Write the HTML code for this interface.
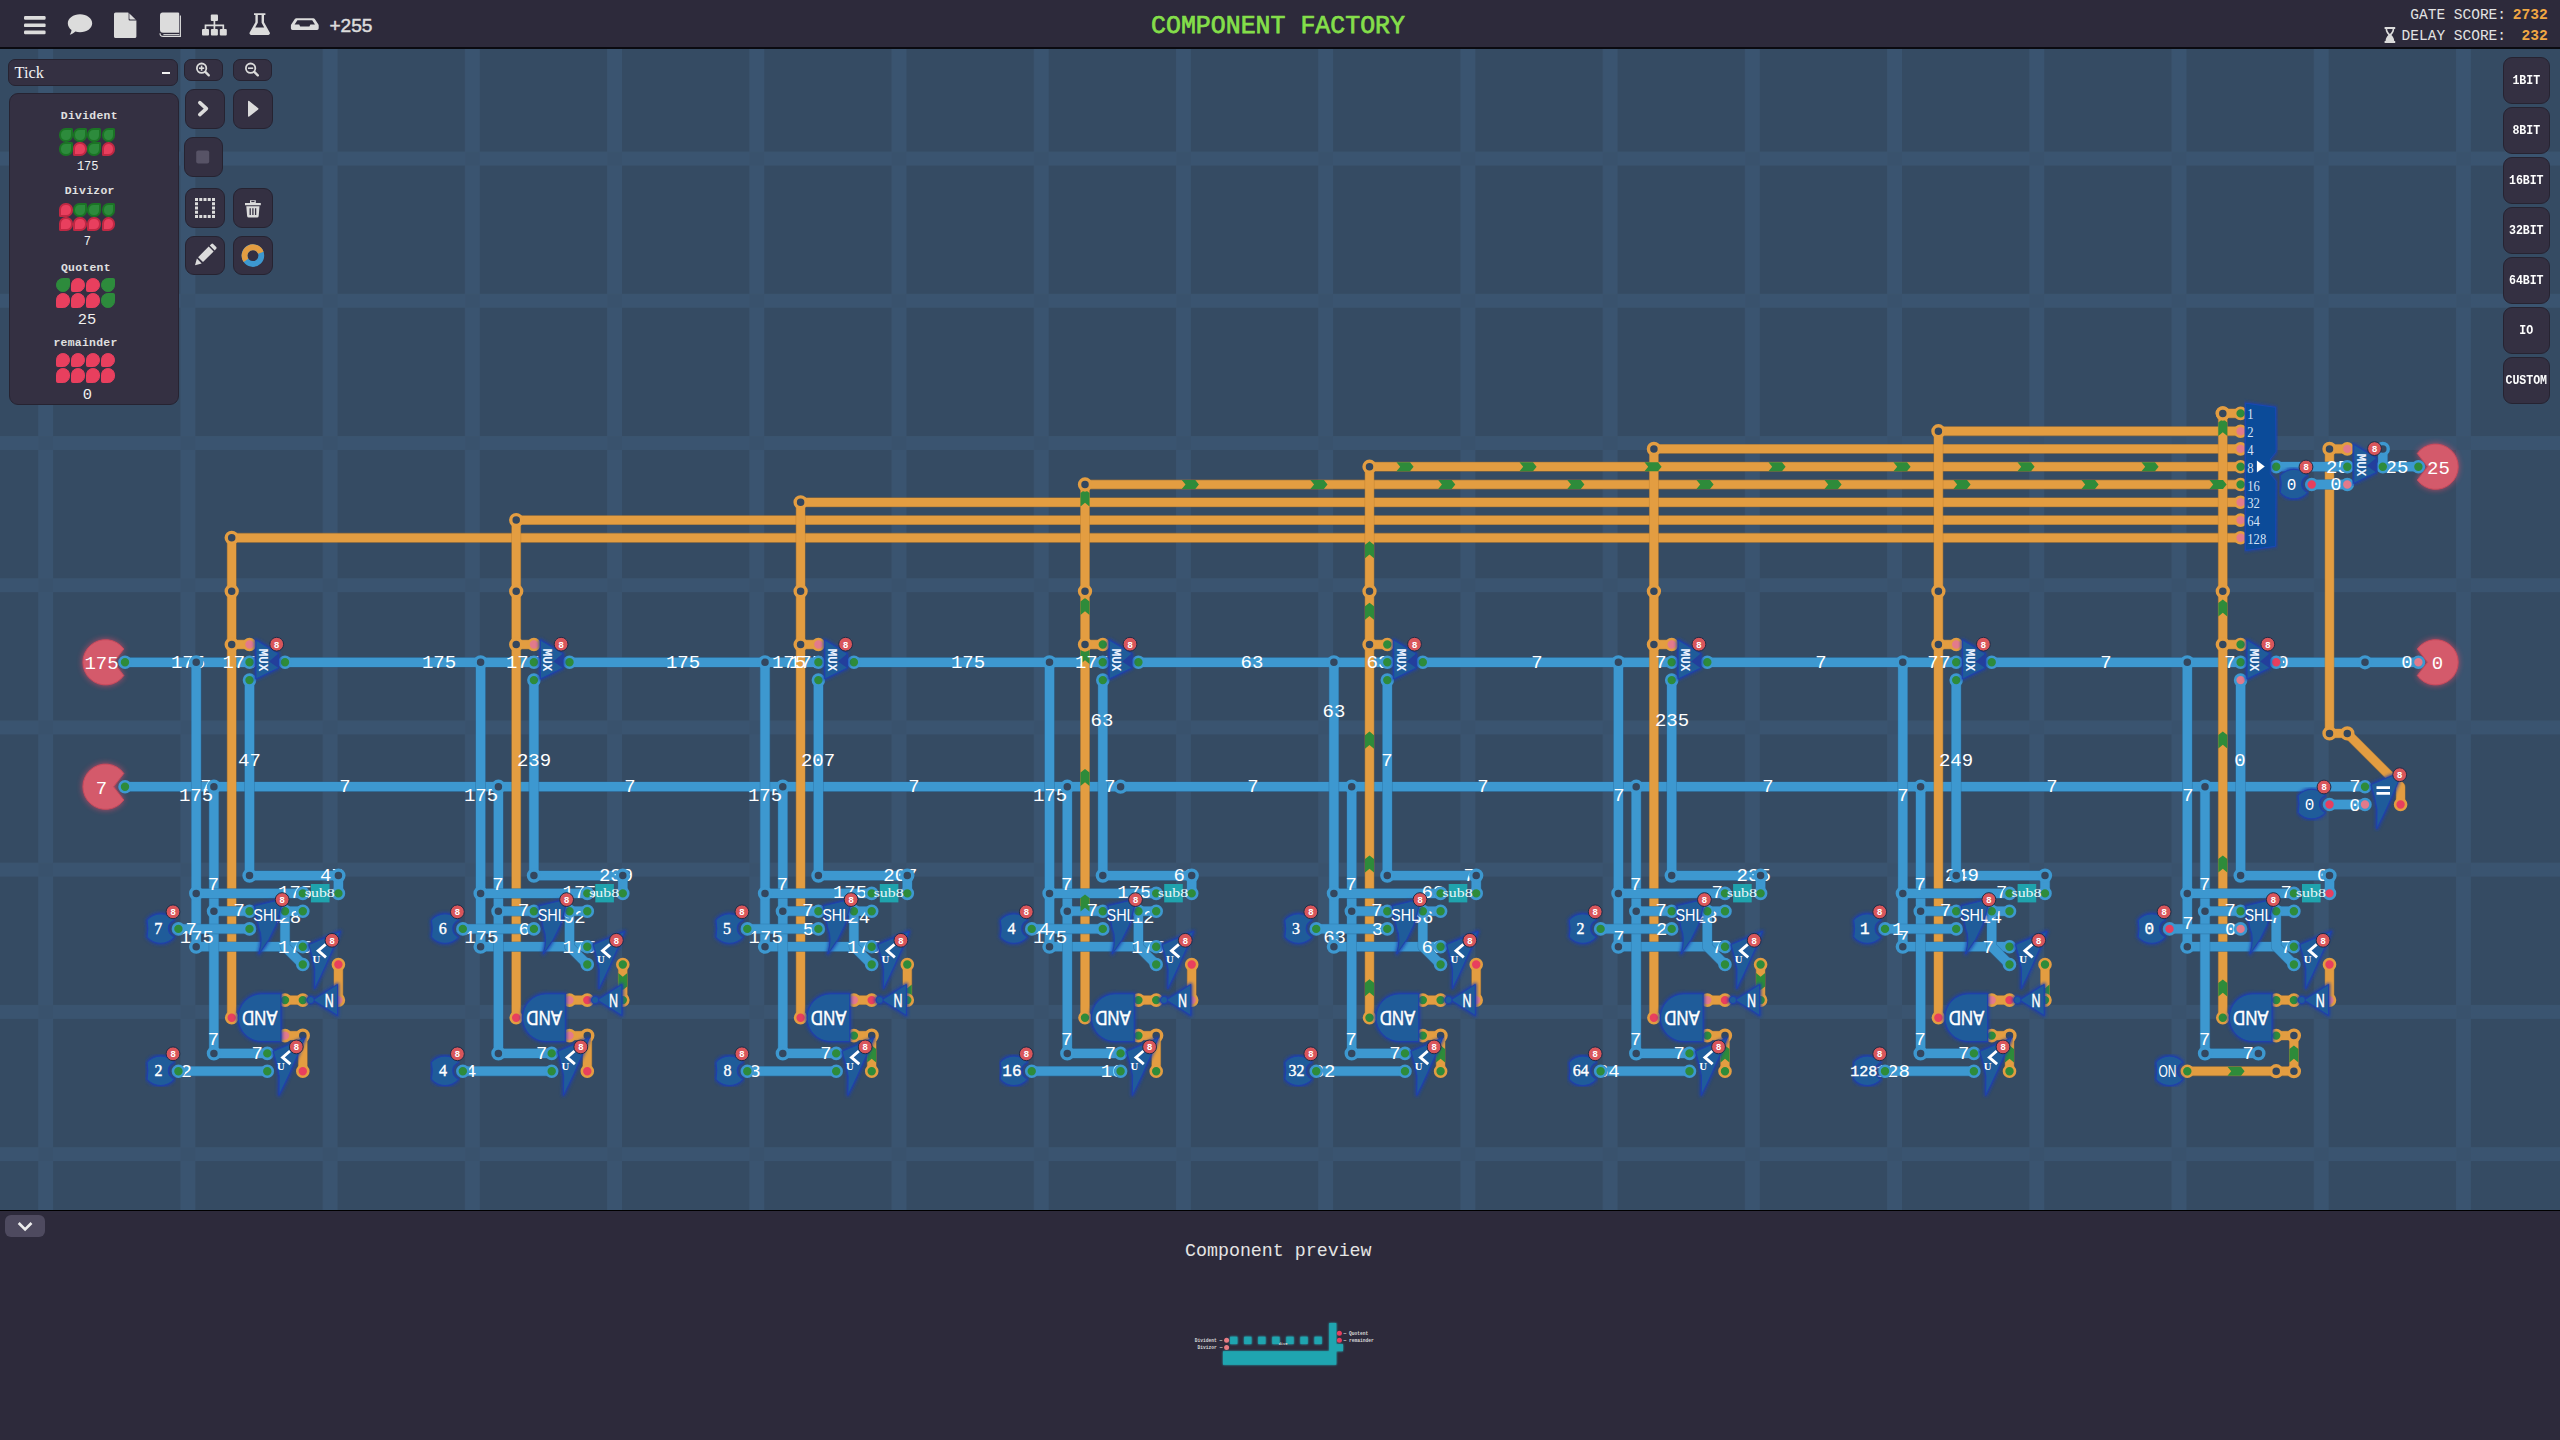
<!DOCTYPE html>
<html><head><meta charset="utf-8"><title>Component Factory</title>
<style>
html,body{margin:0;padding:0;background:#2d2a3b;overflow:hidden}
body{width:2560px;height:1440px;position:relative;font-family:"Liberation Mono",monospace;color:#e6e6e6}
#canvas{position:absolute;left:0;top:0;width:2560px;height:1211px;background:#3a5470;overflow:hidden}
#top{position:absolute;left:0;top:0;width:2560px;height:47px;background:#2d2a3b;border-bottom:2px solid #0a0a10}
#bottom{position:absolute;left:0;top:1210px;width:2560px;height:230px;background:#2d2a3b;border-top:1px solid #000}
.btn{position:absolute;background:#343042;border:1px solid #262331;border-radius:9px;box-sizing:border-box}
.rb{position:absolute;left:2503px;width:46.5px;height:46.5px;background:#343042;border:1px solid #262331;border-radius:9px;box-sizing:border-box;
 font:bold 11.6px "Liberation Mono",monospace;color:#fff;text-align:center;line-height:43.4px;letter-spacing:-0.05px}
.pl{position:absolute;left:0;width:170px;text-align:center;font:bold 11.4px "Liberation Mono",monospace;color:#e0e0e0;letter-spacing:.3px}
.pv{position:absolute;left:0;width:170px;text-align:center;font:12px "Liberation Mono",monospace;color:#f0f0f0}
svg{position:absolute;left:0;top:0}
</style></head><body>
<div id="canvas">

<svg width="2560" height="1211" viewBox="0 0 2560 1211">
<defs>
<pattern id="grid" x="53.1" y="165.5" width="142.222" height="142.222" patternUnits="userSpaceOnUse"><rect x="0" y="0" width="127.42" height="128.42" fill="#354b63"/><rect x="127.42" y="128.42" width="14.8" height="13.8" fill="#39526d"/></pattern>
<g id="bdg"><circle r="6.9" fill="#d9565b" stroke="#1f2c46" stroke-width="1"/><text y="3.3" text-anchor="middle" font-family="Liberation Sans" font-weight="bold" font-size="9.4" fill="#fff">8</text></g>
<path id="chv" d="M0 -8.6 L4.5 -5 L4.5 8.5 L0 4.8 L-4.5 8.5 L-4.5 -5 Z" fill="#2e8b3a"/>
<g id="colS"><path d="M255.9 640 L278.5 653.6 L278.5 668 L255.9 679 Z"/>
<path d="M254.6 905.8 L276.1 900.6 L281.3 905.8 L276.1 924.7 Q270 940 258.9 953.9 Q263.5 938 258.9 928.1 Z"/>
<path d="M340.3 931.4 L308.8 944.6 Q313 958 314.8 969.2 L314.6 988.6 Q320 978 325.1 966.8 L333.3 948.3 Z"/>
<path d="M337.5 984.4 L337.5 1015.4 L313 1000 Z"/><circle cx="310.7" cy="1000" r="3.6"/>
<path d="M280.9 993.8 L262 993.8 A23.8 23.9 0 0 0 262 1041.6 L280.9 1041.6 Z"/>
<path d="M174.2 920.3 A17.5 17.5 0 0 0 147.1 920.3 Q148.8 928.6 147.1 936.9 A17.5 17.5 0 0 0 174.2 936.9 A8.8 8.8 0 0 1 174.2 920.3 Z"/></g>
<g id="ultS"><path d="M340.3 931.4 L308.8 944.6 Q313 958 314.8 969.2 L314.6 988.6 Q320 978 325.1 966.8 L333.3 948.3 Z"/></g>
<g id="cstS"><path d="M13.6 -8.3 A17.5 17.5 0 0 0 -13.5 -8.3 Q-11.8 0.0 -13.5 8.3 A17.5 17.5 0 0 0 13.6 8.3 A8.8 8.8 0 0 1 13.6 -8.3 Z"/></g>
<filter id="glow" x="-5%" y="-5%" width="110%" height="110%"><feGaussianBlur stdDeviation="1.6"/></filter>
<filter id="rglow" x="-30%" y="-30%" width="160%" height="160%"><feGaussianBlur stdDeviation="3"/></filter>
<linearGradient id="shg" x1="0" y1="0" x2="1" y2="1"><stop offset="0" stop-color="#1f5c9a"/><stop offset="1" stop-color="#2a78c4"/></linearGradient>
<g id="col">
 <g filter="url(#glow)" fill="#1f3fae" stroke="#1f3fae" stroke-width="3.5" stroke-linejoin="round" opacity=".85"><use href="#colS"/></g>
 <g fill="#1f5c9a" stroke="#1f3fae" stroke-width="1" stroke-linejoin="round"><use href="#colS"/></g>
 <path d="M278.5 653.6 L269 661.4 L278.5 668 Z" fill="#233f9c"/>
 <rect x="310.9" y="884" width="18.6" height="18.4" fill="#1fa3ad"/>
</g>
<g id="ult2">
 <g filter="url(#glow)" fill="#1f3fae" stroke="#1f3fae" stroke-width="3.5" stroke-linejoin="round" opacity=".85"><use href="#ultS"/></g>
 <g fill="#1f5c9a" stroke="#1f3fae" stroke-width="1" stroke-linejoin="round"><use href="#ultS"/></g>
</g>
<g id="cst">
 <g filter="url(#glow)" fill="#1f3fae" stroke="#1f3fae" stroke-width="3.5" stroke-linejoin="round" opacity=".85"><use href="#cstS"/></g>
 <g fill="#1f5c9a" stroke="#1f3fae" stroke-width="1" stroke-linejoin="round"><use href="#cstS"/></g>
</g>
<g id="ultT"><path d="M325.6 944.3 L318.2 950.7 L326 957.4" fill="none" stroke="#fff" stroke-width="2.9"/><text x="316.5" y="963.1" text-anchor="middle" font-family="Liberation Serif" font-weight="bold" font-size="11" fill="#fff" textLength="7.8" lengthAdjust="spacingAndGlyphs">U</text></g>
<g id="colTop" fill="#fff" font-family="Liberation Sans">
 <text transform="translate(258.9 660.0) rotate(90)" text-anchor="middle" font-family="Liberation Mono" font-weight="bold" font-size="12.6" fill="#eaf2ff">MUX</text>
 <text x="319.8" y="896.8" text-anchor="middle" font-family="Liberation Serif" font-size="12.6" fill="#e8f6f6" textLength="30" lengthAdjust="spacingAndGlyphs">sub8</text>
 <text x="267.3" y="920.6" text-anchor="middle" font-size="16.4" textLength="28" lengthAdjust="spacingAndGlyphs">SHL</text>
 <use href="#ultT"/>
 <text x="329.2" y="1006.8" text-anchor="middle" font-size="18.4" textLength="9" lengthAdjust="spacingAndGlyphs" stroke="#fff" stroke-width=".5">N</text>
 <text transform="translate(259.8 1018) rotate(180)" y="7.2" text-anchor="middle" font-size="20" textLength="35.4" lengthAdjust="spacingAndGlyphs" stroke="#fff" stroke-width=".45">AND</text>
 <use href="#bdg" x="276.7" y="644.2"/><use href="#bdg" x="282.2" y="899.6"/><use href="#bdg" x="332" y="940.3"/>
 <use href="#bdg" x="173" y="911.8"/>
</g>
</defs>
<rect x="0" y="0" width="2560" height="1211" fill="url(#grid)"/>
<polyline points="125.0,662.3 249.5,662.3" fill="none" stroke="#2a6a9c" stroke-opacity=".6" stroke-width="10.5" stroke-linejoin="round"/>
<polyline points="125.0,662.3 249.5,662.3" fill="none" stroke="#3d98d0" stroke-width="9.3" stroke-linejoin="round"/>
<polyline points="285.0,662.3 533.9,662.3" fill="none" stroke="#2a6a9c" stroke-opacity=".6" stroke-width="10.5" stroke-linejoin="round"/>
<polyline points="285.0,662.3 533.9,662.3" fill="none" stroke="#3d98d0" stroke-width="9.3" stroke-linejoin="round"/>
<polyline points="569.5,662.3 818.4,662.3" fill="none" stroke="#2a6a9c" stroke-opacity=".6" stroke-width="10.5" stroke-linejoin="round"/>
<polyline points="569.5,662.3 818.4,662.3" fill="none" stroke="#3d98d0" stroke-width="9.3" stroke-linejoin="round"/>
<polyline points="853.9,662.3 1102.8,662.3" fill="none" stroke="#2a6a9c" stroke-opacity=".6" stroke-width="10.5" stroke-linejoin="round"/>
<polyline points="853.9,662.3 1102.8,662.3" fill="none" stroke="#3d98d0" stroke-width="9.3" stroke-linejoin="round"/>
<polyline points="1138.4,662.3 1387.3,662.3" fill="none" stroke="#2a6a9c" stroke-opacity=".6" stroke-width="10.5" stroke-linejoin="round"/>
<polyline points="1138.4,662.3 1387.3,662.3" fill="none" stroke="#3d98d0" stroke-width="9.3" stroke-linejoin="round"/>
<polyline points="1422.8,662.3 1671.7,662.3" fill="none" stroke="#2a6a9c" stroke-opacity=".6" stroke-width="10.5" stroke-linejoin="round"/>
<polyline points="1422.8,662.3 1671.7,662.3" fill="none" stroke="#3d98d0" stroke-width="9.3" stroke-linejoin="round"/>
<polyline points="1707.3,662.3 1956.2,662.3" fill="none" stroke="#2a6a9c" stroke-opacity=".6" stroke-width="10.5" stroke-linejoin="round"/>
<polyline points="1707.3,662.3 1956.2,662.3" fill="none" stroke="#3d98d0" stroke-width="9.3" stroke-linejoin="round"/>
<polyline points="1991.7,662.3 2240.6,662.3" fill="none" stroke="#2a6a9c" stroke-opacity=".6" stroke-width="10.5" stroke-linejoin="round"/>
<polyline points="1991.7,662.3 2240.6,662.3" fill="none" stroke="#3d98d0" stroke-width="9.3" stroke-linejoin="round"/>
<polyline points="2276.2,662.3 2418.4,662.3" fill="none" stroke="#2a6a9c" stroke-opacity=".6" stroke-width="10.5" stroke-linejoin="round"/>
<polyline points="2276.2,662.3 2418.4,662.3" fill="none" stroke="#3d98d0" stroke-width="9.3" stroke-linejoin="round"/>
<polyline points="125.0,786.7 2365.0,786.7" fill="none" stroke="#2a6a9c" stroke-opacity=".6" stroke-width="10.5" stroke-linejoin="round"/>
<polyline points="125.0,786.7 2365.0,786.7" fill="none" stroke="#3d98d0" stroke-width="9.3" stroke-linejoin="round"/>
<polyline points="231.7,537.8 2240.6,537.8" fill="none" stroke="#b77a2c" stroke-opacity=".6" stroke-width="9.9" stroke-linejoin="round"/>
<polyline points="231.7,537.8 2240.6,537.8" fill="none" stroke="#e39d41" stroke-width="8.7" stroke-linejoin="round"/>
<polyline points="516.2,520.1 2240.6,520.1" fill="none" stroke="#b77a2c" stroke-opacity=".6" stroke-width="9.9" stroke-linejoin="round"/>
<polyline points="516.2,520.1 2240.6,520.1" fill="none" stroke="#e39d41" stroke-width="8.7" stroke-linejoin="round"/>
<polyline points="800.6,502.3 2240.6,502.3" fill="none" stroke="#b77a2c" stroke-opacity=".6" stroke-width="9.9" stroke-linejoin="round"/>
<polyline points="800.6,502.3 2240.6,502.3" fill="none" stroke="#e39d41" stroke-width="8.7" stroke-linejoin="round"/>
<polyline points="1085.0,484.5 2240.6,484.5" fill="none" stroke="#b77a2c" stroke-opacity=".6" stroke-width="9.9" stroke-linejoin="round"/>
<polyline points="1085.0,484.5 2240.6,484.5" fill="none" stroke="#e39d41" stroke-width="8.7" stroke-linejoin="round"/>
<polyline points="1369.5,466.7 2240.6,466.7" fill="none" stroke="#b77a2c" stroke-opacity=".6" stroke-width="9.9" stroke-linejoin="round"/>
<polyline points="1369.5,466.7 2240.6,466.7" fill="none" stroke="#e39d41" stroke-width="8.7" stroke-linejoin="round"/>
<polyline points="1653.9,448.9 2240.6,448.9" fill="none" stroke="#b77a2c" stroke-opacity=".6" stroke-width="9.9" stroke-linejoin="round"/>
<polyline points="1653.9,448.9 2240.6,448.9" fill="none" stroke="#e39d41" stroke-width="8.7" stroke-linejoin="round"/>
<polyline points="1938.4,431.2 2240.6,431.2" fill="none" stroke="#b77a2c" stroke-opacity=".6" stroke-width="9.9" stroke-linejoin="round"/>
<polyline points="1938.4,431.2 2240.6,431.2" fill="none" stroke="#e39d41" stroke-width="8.7" stroke-linejoin="round"/>
<polyline points="2222.8,413.4 2240.6,413.4" fill="none" stroke="#b77a2c" stroke-opacity=".6" stroke-width="9.9" stroke-linejoin="round"/>
<polyline points="2222.8,413.4 2240.6,413.4" fill="none" stroke="#e39d41" stroke-width="8.7" stroke-linejoin="round"/>
<polyline points="2329.5,448.9 2347.3,448.9" fill="none" stroke="#b77a2c" stroke-opacity=".6" stroke-width="9.9" stroke-linejoin="round"/>
<polyline points="2329.5,448.9 2347.3,448.9" fill="none" stroke="#e39d41" stroke-width="8.7" stroke-linejoin="round"/>
<polyline points="2329.5,733.4 2347.3,733.4 2400.6,786.7 2400.6,804.5" fill="none" stroke="#b77a2c" stroke-opacity=".6" stroke-width="9.9" stroke-linejoin="round"/>
<polyline points="2329.5,733.4 2347.3,733.4 2400.6,786.7 2400.6,804.5" fill="none" stroke="#e39d41" stroke-width="8.7" stroke-linejoin="round"/>
<polyline points="231.7,537.8 231.7,1017.8" fill="none" stroke="#b77a2c" stroke-opacity=".6" stroke-width="9.9" stroke-linejoin="round"/>
<polyline points="231.7,537.8 231.7,1017.8" fill="none" stroke="#e39d41" stroke-width="8.7" stroke-linejoin="round"/>
<polyline points="516.2,520.1 516.2,1017.8" fill="none" stroke="#b77a2c" stroke-opacity=".6" stroke-width="9.9" stroke-linejoin="round"/>
<polyline points="516.2,520.1 516.2,1017.8" fill="none" stroke="#e39d41" stroke-width="8.7" stroke-linejoin="round"/>
<polyline points="800.6,502.3 800.6,1017.8" fill="none" stroke="#b77a2c" stroke-opacity=".6" stroke-width="9.9" stroke-linejoin="round"/>
<polyline points="800.6,502.3 800.6,1017.8" fill="none" stroke="#e39d41" stroke-width="8.7" stroke-linejoin="round"/>
<polyline points="1085.0,484.5 1085.0,1017.8" fill="none" stroke="#b77a2c" stroke-opacity=".6" stroke-width="9.9" stroke-linejoin="round"/>
<polyline points="1085.0,484.5 1085.0,1017.8" fill="none" stroke="#e39d41" stroke-width="8.7" stroke-linejoin="round"/>
<polyline points="1369.5,466.7 1369.5,1017.8" fill="none" stroke="#b77a2c" stroke-opacity=".6" stroke-width="9.9" stroke-linejoin="round"/>
<polyline points="1369.5,466.7 1369.5,1017.8" fill="none" stroke="#e39d41" stroke-width="8.7" stroke-linejoin="round"/>
<polyline points="1653.9,448.9 1653.9,1017.8" fill="none" stroke="#b77a2c" stroke-opacity=".6" stroke-width="9.9" stroke-linejoin="round"/>
<polyline points="1653.9,448.9 1653.9,1017.8" fill="none" stroke="#e39d41" stroke-width="8.7" stroke-linejoin="round"/>
<polyline points="1938.4,431.2 1938.4,1017.8" fill="none" stroke="#b77a2c" stroke-opacity=".6" stroke-width="9.9" stroke-linejoin="round"/>
<polyline points="1938.4,431.2 1938.4,1017.8" fill="none" stroke="#e39d41" stroke-width="8.7" stroke-linejoin="round"/>
<polyline points="2222.8,413.4 2222.8,1017.8" fill="none" stroke="#b77a2c" stroke-opacity=".6" stroke-width="9.9" stroke-linejoin="round"/>
<polyline points="2222.8,413.4 2222.8,1017.8" fill="none" stroke="#e39d41" stroke-width="8.7" stroke-linejoin="round"/>
<polyline points="2329.5,448.9 2329.5,733.4" fill="none" stroke="#b77a2c" stroke-opacity=".6" stroke-width="9.9" stroke-linejoin="round"/>
<polyline points="2329.5,448.9 2329.5,733.4" fill="none" stroke="#e39d41" stroke-width="8.7" stroke-linejoin="round"/>
<polyline points="196.2,662.3 196.2,946.7 302.8,946.7" fill="none" stroke="#2a6a9c" stroke-opacity=".6" stroke-width="10.5" stroke-linejoin="round"/>
<polyline points="196.2,662.3 196.2,946.7 302.8,946.7" fill="none" stroke="#3d98d0" stroke-width="9.3" stroke-linejoin="round"/>
<polyline points="213.9,786.7 213.9,1053.4 267.3,1053.4" fill="none" stroke="#2a6a9c" stroke-opacity=".6" stroke-width="10.5" stroke-linejoin="round"/>
<polyline points="213.9,786.7 213.9,1053.4 267.3,1053.4" fill="none" stroke="#3d98d0" stroke-width="9.3" stroke-linejoin="round"/>
<polyline points="249.5,680.1 249.5,875.6 338.4,875.6 338.4,893.4" fill="none" stroke="#2a6a9c" stroke-opacity=".6" stroke-width="10.5" stroke-linejoin="round"/>
<polyline points="249.5,680.1 249.5,875.6 338.4,875.6 338.4,893.4" fill="none" stroke="#3d98d0" stroke-width="9.3" stroke-linejoin="round"/>
<polyline points="196.2,893.4 302.8,893.4" fill="none" stroke="#2a6a9c" stroke-opacity=".6" stroke-width="10.5" stroke-linejoin="round"/>
<polyline points="196.2,893.4 302.8,893.4" fill="none" stroke="#3d98d0" stroke-width="9.3" stroke-linejoin="round"/>
<polyline points="213.9,911.2 249.5,911.2" fill="none" stroke="#2a6a9c" stroke-opacity=".6" stroke-width="10.5" stroke-linejoin="round"/>
<polyline points="213.9,911.2 249.5,911.2" fill="none" stroke="#3d98d0" stroke-width="9.3" stroke-linejoin="round"/>
<polyline points="178.4,928.9 249.5,928.9" fill="none" stroke="#2a6a9c" stroke-opacity=".6" stroke-width="10.5" stroke-linejoin="round"/>
<polyline points="178.4,928.9 249.5,928.9" fill="none" stroke="#3d98d0" stroke-width="9.3" stroke-linejoin="round"/>
<polyline points="285.0,911.2 302.8,911.2" fill="none" stroke="#2a6a9c" stroke-opacity=".6" stroke-width="10.5" stroke-linejoin="round"/>
<polyline points="285.0,911.2 302.8,911.2" fill="none" stroke="#3d98d0" stroke-width="9.3" stroke-linejoin="round"/>
<polyline points="285.0,911.2 285.0,946.7 302.8,964.5" fill="none" stroke="#2a6a9c" stroke-opacity=".6" stroke-width="10.5" stroke-linejoin="round"/>
<polyline points="285.0,911.2 285.0,946.7 302.8,964.5" fill="none" stroke="#3d98d0" stroke-width="9.3" stroke-linejoin="round"/>
<polyline points="178.4,1071.2 267.3,1071.2" fill="none" stroke="#2a6a9c" stroke-opacity=".6" stroke-width="10.5" stroke-linejoin="round"/>
<polyline points="178.4,1071.2 267.3,1071.2" fill="none" stroke="#3d98d0" stroke-width="9.3" stroke-linejoin="round"/>
<polyline points="231.7,644.5 249.5,644.5" fill="none" stroke="#b77a2c" stroke-opacity=".6" stroke-width="9.9" stroke-linejoin="round"/>
<polyline points="231.7,644.5 249.5,644.5" fill="none" stroke="#e39d41" stroke-width="8.7" stroke-linejoin="round"/>
<polyline points="285.0,1000.1 302.8,1000.1" fill="none" stroke="#b77a2c" stroke-opacity=".6" stroke-width="9.9" stroke-linejoin="round"/>
<polyline points="285.0,1000.1 302.8,1000.1" fill="none" stroke="#e39d41" stroke-width="8.7" stroke-linejoin="round"/>
<polyline points="338.4,964.5 338.4,1000.1" fill="none" stroke="#b77a2c" stroke-opacity=".6" stroke-width="9.9" stroke-linejoin="round"/>
<polyline points="338.4,964.5 338.4,1000.1" fill="none" stroke="#e39d41" stroke-width="8.7" stroke-linejoin="round"/>
<polyline points="285.0,1035.6 302.8,1035.6 302.8,1071.2" fill="none" stroke="#b77a2c" stroke-opacity=".6" stroke-width="9.9" stroke-linejoin="round"/>
<polyline points="285.0,1035.6 302.8,1035.6 302.8,1071.2" fill="none" stroke="#e39d41" stroke-width="8.7" stroke-linejoin="round"/>
<polyline points="480.6,662.3 480.6,946.7 587.3,946.7" fill="none" stroke="#2a6a9c" stroke-opacity=".6" stroke-width="10.5" stroke-linejoin="round"/>
<polyline points="480.6,662.3 480.6,946.7 587.3,946.7" fill="none" stroke="#3d98d0" stroke-width="9.3" stroke-linejoin="round"/>
<polyline points="498.4,786.7 498.4,1053.4 551.7,1053.4" fill="none" stroke="#2a6a9c" stroke-opacity=".6" stroke-width="10.5" stroke-linejoin="round"/>
<polyline points="498.4,786.7 498.4,1053.4 551.7,1053.4" fill="none" stroke="#3d98d0" stroke-width="9.3" stroke-linejoin="round"/>
<polyline points="533.9,680.1 533.9,875.6 622.8,875.6 622.8,893.4" fill="none" stroke="#2a6a9c" stroke-opacity=".6" stroke-width="10.5" stroke-linejoin="round"/>
<polyline points="533.9,680.1 533.9,875.6 622.8,875.6 622.8,893.4" fill="none" stroke="#3d98d0" stroke-width="9.3" stroke-linejoin="round"/>
<polyline points="480.6,893.4 587.3,893.4" fill="none" stroke="#2a6a9c" stroke-opacity=".6" stroke-width="10.5" stroke-linejoin="round"/>
<polyline points="480.6,893.4 587.3,893.4" fill="none" stroke="#3d98d0" stroke-width="9.3" stroke-linejoin="round"/>
<polyline points="498.4,911.2 533.9,911.2" fill="none" stroke="#2a6a9c" stroke-opacity=".6" stroke-width="10.5" stroke-linejoin="round"/>
<polyline points="498.4,911.2 533.9,911.2" fill="none" stroke="#3d98d0" stroke-width="9.3" stroke-linejoin="round"/>
<polyline points="462.8,928.9 533.9,928.9" fill="none" stroke="#2a6a9c" stroke-opacity=".6" stroke-width="10.5" stroke-linejoin="round"/>
<polyline points="462.8,928.9 533.9,928.9" fill="none" stroke="#3d98d0" stroke-width="9.3" stroke-linejoin="round"/>
<polyline points="569.5,911.2 587.3,911.2" fill="none" stroke="#2a6a9c" stroke-opacity=".6" stroke-width="10.5" stroke-linejoin="round"/>
<polyline points="569.5,911.2 587.3,911.2" fill="none" stroke="#3d98d0" stroke-width="9.3" stroke-linejoin="round"/>
<polyline points="569.5,911.2 569.5,946.7 587.3,964.5" fill="none" stroke="#2a6a9c" stroke-opacity=".6" stroke-width="10.5" stroke-linejoin="round"/>
<polyline points="569.5,911.2 569.5,946.7 587.3,964.5" fill="none" stroke="#3d98d0" stroke-width="9.3" stroke-linejoin="round"/>
<polyline points="462.8,1071.2 551.7,1071.2" fill="none" stroke="#2a6a9c" stroke-opacity=".6" stroke-width="10.5" stroke-linejoin="round"/>
<polyline points="462.8,1071.2 551.7,1071.2" fill="none" stroke="#3d98d0" stroke-width="9.3" stroke-linejoin="round"/>
<polyline points="516.2,644.5 533.9,644.5" fill="none" stroke="#b77a2c" stroke-opacity=".6" stroke-width="9.9" stroke-linejoin="round"/>
<polyline points="516.2,644.5 533.9,644.5" fill="none" stroke="#e39d41" stroke-width="8.7" stroke-linejoin="round"/>
<polyline points="569.5,1000.1 587.3,1000.1" fill="none" stroke="#b77a2c" stroke-opacity=".6" stroke-width="9.9" stroke-linejoin="round"/>
<polyline points="569.5,1000.1 587.3,1000.1" fill="none" stroke="#e39d41" stroke-width="8.7" stroke-linejoin="round"/>
<polyline points="622.8,964.5 622.8,1000.1" fill="none" stroke="#b77a2c" stroke-opacity=".6" stroke-width="9.9" stroke-linejoin="round"/>
<polyline points="622.8,964.5 622.8,1000.1" fill="none" stroke="#e39d41" stroke-width="8.7" stroke-linejoin="round"/>
<polyline points="569.5,1035.6 587.3,1035.6 587.3,1071.2" fill="none" stroke="#b77a2c" stroke-opacity=".6" stroke-width="9.9" stroke-linejoin="round"/>
<polyline points="569.5,1035.6 587.3,1035.6 587.3,1071.2" fill="none" stroke="#e39d41" stroke-width="8.7" stroke-linejoin="round"/>
<polyline points="765.0,662.3 765.0,946.7 871.7,946.7" fill="none" stroke="#2a6a9c" stroke-opacity=".6" stroke-width="10.5" stroke-linejoin="round"/>
<polyline points="765.0,662.3 765.0,946.7 871.7,946.7" fill="none" stroke="#3d98d0" stroke-width="9.3" stroke-linejoin="round"/>
<polyline points="782.8,786.7 782.8,1053.4 836.2,1053.4" fill="none" stroke="#2a6a9c" stroke-opacity=".6" stroke-width="10.5" stroke-linejoin="round"/>
<polyline points="782.8,786.7 782.8,1053.4 836.2,1053.4" fill="none" stroke="#3d98d0" stroke-width="9.3" stroke-linejoin="round"/>
<polyline points="818.4,680.1 818.4,875.6 907.3,875.6 907.3,893.4" fill="none" stroke="#2a6a9c" stroke-opacity=".6" stroke-width="10.5" stroke-linejoin="round"/>
<polyline points="818.4,680.1 818.4,875.6 907.3,875.6 907.3,893.4" fill="none" stroke="#3d98d0" stroke-width="9.3" stroke-linejoin="round"/>
<polyline points="765.0,893.4 871.7,893.4" fill="none" stroke="#2a6a9c" stroke-opacity=".6" stroke-width="10.5" stroke-linejoin="round"/>
<polyline points="765.0,893.4 871.7,893.4" fill="none" stroke="#3d98d0" stroke-width="9.3" stroke-linejoin="round"/>
<polyline points="782.8,911.2 818.4,911.2" fill="none" stroke="#2a6a9c" stroke-opacity=".6" stroke-width="10.5" stroke-linejoin="round"/>
<polyline points="782.8,911.2 818.4,911.2" fill="none" stroke="#3d98d0" stroke-width="9.3" stroke-linejoin="round"/>
<polyline points="747.3,928.9 818.4,928.9" fill="none" stroke="#2a6a9c" stroke-opacity=".6" stroke-width="10.5" stroke-linejoin="round"/>
<polyline points="747.3,928.9 818.4,928.9" fill="none" stroke="#3d98d0" stroke-width="9.3" stroke-linejoin="round"/>
<polyline points="853.9,911.2 871.7,911.2" fill="none" stroke="#2a6a9c" stroke-opacity=".6" stroke-width="10.5" stroke-linejoin="round"/>
<polyline points="853.9,911.2 871.7,911.2" fill="none" stroke="#3d98d0" stroke-width="9.3" stroke-linejoin="round"/>
<polyline points="853.9,911.2 853.9,946.7 871.7,964.5" fill="none" stroke="#2a6a9c" stroke-opacity=".6" stroke-width="10.5" stroke-linejoin="round"/>
<polyline points="853.9,911.2 853.9,946.7 871.7,964.5" fill="none" stroke="#3d98d0" stroke-width="9.3" stroke-linejoin="round"/>
<polyline points="747.3,1071.2 836.2,1071.2" fill="none" stroke="#2a6a9c" stroke-opacity=".6" stroke-width="10.5" stroke-linejoin="round"/>
<polyline points="747.3,1071.2 836.2,1071.2" fill="none" stroke="#3d98d0" stroke-width="9.3" stroke-linejoin="round"/>
<polyline points="800.6,644.5 818.4,644.5" fill="none" stroke="#b77a2c" stroke-opacity=".6" stroke-width="9.9" stroke-linejoin="round"/>
<polyline points="800.6,644.5 818.4,644.5" fill="none" stroke="#e39d41" stroke-width="8.7" stroke-linejoin="round"/>
<polyline points="853.9,1000.1 871.7,1000.1" fill="none" stroke="#b77a2c" stroke-opacity=".6" stroke-width="9.9" stroke-linejoin="round"/>
<polyline points="853.9,1000.1 871.7,1000.1" fill="none" stroke="#e39d41" stroke-width="8.7" stroke-linejoin="round"/>
<polyline points="907.3,964.5 907.3,1000.1" fill="none" stroke="#b77a2c" stroke-opacity=".6" stroke-width="9.9" stroke-linejoin="round"/>
<polyline points="907.3,964.5 907.3,1000.1" fill="none" stroke="#e39d41" stroke-width="8.7" stroke-linejoin="round"/>
<polyline points="853.9,1035.6 871.7,1035.6 871.7,1071.2" fill="none" stroke="#b77a2c" stroke-opacity=".6" stroke-width="9.9" stroke-linejoin="round"/>
<polyline points="853.9,1035.6 871.7,1035.6 871.7,1071.2" fill="none" stroke="#e39d41" stroke-width="8.7" stroke-linejoin="round"/>
<polyline points="1049.5,662.3 1049.5,946.7 1156.2,946.7" fill="none" stroke="#2a6a9c" stroke-opacity=".6" stroke-width="10.5" stroke-linejoin="round"/>
<polyline points="1049.5,662.3 1049.5,946.7 1156.2,946.7" fill="none" stroke="#3d98d0" stroke-width="9.3" stroke-linejoin="round"/>
<polyline points="1067.3,786.7 1067.3,1053.4 1120.6,1053.4" fill="none" stroke="#2a6a9c" stroke-opacity=".6" stroke-width="10.5" stroke-linejoin="round"/>
<polyline points="1067.3,786.7 1067.3,1053.4 1120.6,1053.4" fill="none" stroke="#3d98d0" stroke-width="9.3" stroke-linejoin="round"/>
<polyline points="1102.8,680.1 1102.8,875.6 1191.7,875.6 1191.7,893.4" fill="none" stroke="#2a6a9c" stroke-opacity=".6" stroke-width="10.5" stroke-linejoin="round"/>
<polyline points="1102.8,680.1 1102.8,875.6 1191.7,875.6 1191.7,893.4" fill="none" stroke="#3d98d0" stroke-width="9.3" stroke-linejoin="round"/>
<polyline points="1049.5,893.4 1156.2,893.4" fill="none" stroke="#2a6a9c" stroke-opacity=".6" stroke-width="10.5" stroke-linejoin="round"/>
<polyline points="1049.5,893.4 1156.2,893.4" fill="none" stroke="#3d98d0" stroke-width="9.3" stroke-linejoin="round"/>
<polyline points="1067.3,911.2 1102.8,911.2" fill="none" stroke="#2a6a9c" stroke-opacity=".6" stroke-width="10.5" stroke-linejoin="round"/>
<polyline points="1067.3,911.2 1102.8,911.2" fill="none" stroke="#3d98d0" stroke-width="9.3" stroke-linejoin="round"/>
<polyline points="1031.7,928.9 1102.8,928.9" fill="none" stroke="#2a6a9c" stroke-opacity=".6" stroke-width="10.5" stroke-linejoin="round"/>
<polyline points="1031.7,928.9 1102.8,928.9" fill="none" stroke="#3d98d0" stroke-width="9.3" stroke-linejoin="round"/>
<polyline points="1138.4,911.2 1156.2,911.2" fill="none" stroke="#2a6a9c" stroke-opacity=".6" stroke-width="10.5" stroke-linejoin="round"/>
<polyline points="1138.4,911.2 1156.2,911.2" fill="none" stroke="#3d98d0" stroke-width="9.3" stroke-linejoin="round"/>
<polyline points="1138.4,911.2 1138.4,946.7 1156.2,964.5" fill="none" stroke="#2a6a9c" stroke-opacity=".6" stroke-width="10.5" stroke-linejoin="round"/>
<polyline points="1138.4,911.2 1138.4,946.7 1156.2,964.5" fill="none" stroke="#3d98d0" stroke-width="9.3" stroke-linejoin="round"/>
<polyline points="1031.7,1071.2 1120.6,1071.2" fill="none" stroke="#2a6a9c" stroke-opacity=".6" stroke-width="10.5" stroke-linejoin="round"/>
<polyline points="1031.7,1071.2 1120.6,1071.2" fill="none" stroke="#3d98d0" stroke-width="9.3" stroke-linejoin="round"/>
<polyline points="1085.0,644.5 1102.8,644.5" fill="none" stroke="#b77a2c" stroke-opacity=".6" stroke-width="9.9" stroke-linejoin="round"/>
<polyline points="1085.0,644.5 1102.8,644.5" fill="none" stroke="#e39d41" stroke-width="8.7" stroke-linejoin="round"/>
<polyline points="1138.4,1000.1 1156.2,1000.1" fill="none" stroke="#b77a2c" stroke-opacity=".6" stroke-width="9.9" stroke-linejoin="round"/>
<polyline points="1138.4,1000.1 1156.2,1000.1" fill="none" stroke="#e39d41" stroke-width="8.7" stroke-linejoin="round"/>
<polyline points="1191.7,964.5 1191.7,1000.1" fill="none" stroke="#b77a2c" stroke-opacity=".6" stroke-width="9.9" stroke-linejoin="round"/>
<polyline points="1191.7,964.5 1191.7,1000.1" fill="none" stroke="#e39d41" stroke-width="8.7" stroke-linejoin="round"/>
<polyline points="1138.4,1035.6 1156.2,1035.6 1156.2,1071.2" fill="none" stroke="#b77a2c" stroke-opacity=".6" stroke-width="9.9" stroke-linejoin="round"/>
<polyline points="1138.4,1035.6 1156.2,1035.6 1156.2,1071.2" fill="none" stroke="#e39d41" stroke-width="8.7" stroke-linejoin="round"/>
<polyline points="1333.9,662.3 1333.9,946.7 1440.6,946.7" fill="none" stroke="#2a6a9c" stroke-opacity=".6" stroke-width="10.5" stroke-linejoin="round"/>
<polyline points="1333.9,662.3 1333.9,946.7 1440.6,946.7" fill="none" stroke="#3d98d0" stroke-width="9.3" stroke-linejoin="round"/>
<polyline points="1351.7,786.7 1351.7,1053.4 1405.0,1053.4" fill="none" stroke="#2a6a9c" stroke-opacity=".6" stroke-width="10.5" stroke-linejoin="round"/>
<polyline points="1351.7,786.7 1351.7,1053.4 1405.0,1053.4" fill="none" stroke="#3d98d0" stroke-width="9.3" stroke-linejoin="round"/>
<polyline points="1387.3,680.1 1387.3,875.6 1476.2,875.6 1476.2,893.4" fill="none" stroke="#2a6a9c" stroke-opacity=".6" stroke-width="10.5" stroke-linejoin="round"/>
<polyline points="1387.3,680.1 1387.3,875.6 1476.2,875.6 1476.2,893.4" fill="none" stroke="#3d98d0" stroke-width="9.3" stroke-linejoin="round"/>
<polyline points="1333.9,893.4 1440.6,893.4" fill="none" stroke="#2a6a9c" stroke-opacity=".6" stroke-width="10.5" stroke-linejoin="round"/>
<polyline points="1333.9,893.4 1440.6,893.4" fill="none" stroke="#3d98d0" stroke-width="9.3" stroke-linejoin="round"/>
<polyline points="1351.7,911.2 1387.3,911.2" fill="none" stroke="#2a6a9c" stroke-opacity=".6" stroke-width="10.5" stroke-linejoin="round"/>
<polyline points="1351.7,911.2 1387.3,911.2" fill="none" stroke="#3d98d0" stroke-width="9.3" stroke-linejoin="round"/>
<polyline points="1316.2,928.9 1387.3,928.9" fill="none" stroke="#2a6a9c" stroke-opacity=".6" stroke-width="10.5" stroke-linejoin="round"/>
<polyline points="1316.2,928.9 1387.3,928.9" fill="none" stroke="#3d98d0" stroke-width="9.3" stroke-linejoin="round"/>
<polyline points="1422.8,911.2 1440.6,911.2" fill="none" stroke="#2a6a9c" stroke-opacity=".6" stroke-width="10.5" stroke-linejoin="round"/>
<polyline points="1422.8,911.2 1440.6,911.2" fill="none" stroke="#3d98d0" stroke-width="9.3" stroke-linejoin="round"/>
<polyline points="1422.8,911.2 1422.8,946.7 1440.6,964.5" fill="none" stroke="#2a6a9c" stroke-opacity=".6" stroke-width="10.5" stroke-linejoin="round"/>
<polyline points="1422.8,911.2 1422.8,946.7 1440.6,964.5" fill="none" stroke="#3d98d0" stroke-width="9.3" stroke-linejoin="round"/>
<polyline points="1316.2,1071.2 1405.0,1071.2" fill="none" stroke="#2a6a9c" stroke-opacity=".6" stroke-width="10.5" stroke-linejoin="round"/>
<polyline points="1316.2,1071.2 1405.0,1071.2" fill="none" stroke="#3d98d0" stroke-width="9.3" stroke-linejoin="round"/>
<polyline points="1369.5,644.5 1387.3,644.5" fill="none" stroke="#b77a2c" stroke-opacity=".6" stroke-width="9.9" stroke-linejoin="round"/>
<polyline points="1369.5,644.5 1387.3,644.5" fill="none" stroke="#e39d41" stroke-width="8.7" stroke-linejoin="round"/>
<polyline points="1422.8,1000.1 1440.6,1000.1" fill="none" stroke="#b77a2c" stroke-opacity=".6" stroke-width="9.9" stroke-linejoin="round"/>
<polyline points="1422.8,1000.1 1440.6,1000.1" fill="none" stroke="#e39d41" stroke-width="8.7" stroke-linejoin="round"/>
<polyline points="1476.2,964.5 1476.2,1000.1" fill="none" stroke="#b77a2c" stroke-opacity=".6" stroke-width="9.9" stroke-linejoin="round"/>
<polyline points="1476.2,964.5 1476.2,1000.1" fill="none" stroke="#e39d41" stroke-width="8.7" stroke-linejoin="round"/>
<polyline points="1422.8,1035.6 1440.6,1035.6 1440.6,1071.2" fill="none" stroke="#b77a2c" stroke-opacity=".6" stroke-width="9.9" stroke-linejoin="round"/>
<polyline points="1422.8,1035.6 1440.6,1035.6 1440.6,1071.2" fill="none" stroke="#e39d41" stroke-width="8.7" stroke-linejoin="round"/>
<polyline points="1618.4,662.3 1618.4,946.7 1725.0,946.7" fill="none" stroke="#2a6a9c" stroke-opacity=".6" stroke-width="10.5" stroke-linejoin="round"/>
<polyline points="1618.4,662.3 1618.4,946.7 1725.0,946.7" fill="none" stroke="#3d98d0" stroke-width="9.3" stroke-linejoin="round"/>
<polyline points="1636.2,786.7 1636.2,1053.4 1689.5,1053.4" fill="none" stroke="#2a6a9c" stroke-opacity=".6" stroke-width="10.5" stroke-linejoin="round"/>
<polyline points="1636.2,786.7 1636.2,1053.4 1689.5,1053.4" fill="none" stroke="#3d98d0" stroke-width="9.3" stroke-linejoin="round"/>
<polyline points="1671.7,680.1 1671.7,875.6 1760.6,875.6 1760.6,893.4" fill="none" stroke="#2a6a9c" stroke-opacity=".6" stroke-width="10.5" stroke-linejoin="round"/>
<polyline points="1671.7,680.1 1671.7,875.6 1760.6,875.6 1760.6,893.4" fill="none" stroke="#3d98d0" stroke-width="9.3" stroke-linejoin="round"/>
<polyline points="1618.4,893.4 1725.0,893.4" fill="none" stroke="#2a6a9c" stroke-opacity=".6" stroke-width="10.5" stroke-linejoin="round"/>
<polyline points="1618.4,893.4 1725.0,893.4" fill="none" stroke="#3d98d0" stroke-width="9.3" stroke-linejoin="round"/>
<polyline points="1636.2,911.2 1671.7,911.2" fill="none" stroke="#2a6a9c" stroke-opacity=".6" stroke-width="10.5" stroke-linejoin="round"/>
<polyline points="1636.2,911.2 1671.7,911.2" fill="none" stroke="#3d98d0" stroke-width="9.3" stroke-linejoin="round"/>
<polyline points="1600.6,928.9 1671.7,928.9" fill="none" stroke="#2a6a9c" stroke-opacity=".6" stroke-width="10.5" stroke-linejoin="round"/>
<polyline points="1600.6,928.9 1671.7,928.9" fill="none" stroke="#3d98d0" stroke-width="9.3" stroke-linejoin="round"/>
<polyline points="1707.3,911.2 1725.0,911.2" fill="none" stroke="#2a6a9c" stroke-opacity=".6" stroke-width="10.5" stroke-linejoin="round"/>
<polyline points="1707.3,911.2 1725.0,911.2" fill="none" stroke="#3d98d0" stroke-width="9.3" stroke-linejoin="round"/>
<polyline points="1707.3,911.2 1707.3,946.7 1725.0,964.5" fill="none" stroke="#2a6a9c" stroke-opacity=".6" stroke-width="10.5" stroke-linejoin="round"/>
<polyline points="1707.3,911.2 1707.3,946.7 1725.0,964.5" fill="none" stroke="#3d98d0" stroke-width="9.3" stroke-linejoin="round"/>
<polyline points="1600.6,1071.2 1689.5,1071.2" fill="none" stroke="#2a6a9c" stroke-opacity=".6" stroke-width="10.5" stroke-linejoin="round"/>
<polyline points="1600.6,1071.2 1689.5,1071.2" fill="none" stroke="#3d98d0" stroke-width="9.3" stroke-linejoin="round"/>
<polyline points="1653.9,644.5 1671.7,644.5" fill="none" stroke="#b77a2c" stroke-opacity=".6" stroke-width="9.9" stroke-linejoin="round"/>
<polyline points="1653.9,644.5 1671.7,644.5" fill="none" stroke="#e39d41" stroke-width="8.7" stroke-linejoin="round"/>
<polyline points="1707.3,1000.1 1725.0,1000.1" fill="none" stroke="#b77a2c" stroke-opacity=".6" stroke-width="9.9" stroke-linejoin="round"/>
<polyline points="1707.3,1000.1 1725.0,1000.1" fill="none" stroke="#e39d41" stroke-width="8.7" stroke-linejoin="round"/>
<polyline points="1760.6,964.5 1760.6,1000.1" fill="none" stroke="#b77a2c" stroke-opacity=".6" stroke-width="9.9" stroke-linejoin="round"/>
<polyline points="1760.6,964.5 1760.6,1000.1" fill="none" stroke="#e39d41" stroke-width="8.7" stroke-linejoin="round"/>
<polyline points="1707.3,1035.6 1725.0,1035.6 1725.0,1071.2" fill="none" stroke="#b77a2c" stroke-opacity=".6" stroke-width="9.9" stroke-linejoin="round"/>
<polyline points="1707.3,1035.6 1725.0,1035.6 1725.0,1071.2" fill="none" stroke="#e39d41" stroke-width="8.7" stroke-linejoin="round"/>
<polyline points="1902.8,662.3 1902.8,946.7 2009.5,946.7" fill="none" stroke="#2a6a9c" stroke-opacity=".6" stroke-width="10.5" stroke-linejoin="round"/>
<polyline points="1902.8,662.3 1902.8,946.7 2009.5,946.7" fill="none" stroke="#3d98d0" stroke-width="9.3" stroke-linejoin="round"/>
<polyline points="1920.6,786.7 1920.6,1053.4 1973.9,1053.4" fill="none" stroke="#2a6a9c" stroke-opacity=".6" stroke-width="10.5" stroke-linejoin="round"/>
<polyline points="1920.6,786.7 1920.6,1053.4 1973.9,1053.4" fill="none" stroke="#3d98d0" stroke-width="9.3" stroke-linejoin="round"/>
<polyline points="1956.2,680.1 1956.2,875.6 2045.0,875.6 2045.0,893.4" fill="none" stroke="#2a6a9c" stroke-opacity=".6" stroke-width="10.5" stroke-linejoin="round"/>
<polyline points="1956.2,680.1 1956.2,875.6 2045.0,875.6 2045.0,893.4" fill="none" stroke="#3d98d0" stroke-width="9.3" stroke-linejoin="round"/>
<polyline points="1902.8,893.4 2009.5,893.4" fill="none" stroke="#2a6a9c" stroke-opacity=".6" stroke-width="10.5" stroke-linejoin="round"/>
<polyline points="1902.8,893.4 2009.5,893.4" fill="none" stroke="#3d98d0" stroke-width="9.3" stroke-linejoin="round"/>
<polyline points="1920.6,911.2 1956.2,911.2" fill="none" stroke="#2a6a9c" stroke-opacity=".6" stroke-width="10.5" stroke-linejoin="round"/>
<polyline points="1920.6,911.2 1956.2,911.2" fill="none" stroke="#3d98d0" stroke-width="9.3" stroke-linejoin="round"/>
<polyline points="1885.0,928.9 1956.2,928.9" fill="none" stroke="#2a6a9c" stroke-opacity=".6" stroke-width="10.5" stroke-linejoin="round"/>
<polyline points="1885.0,928.9 1956.2,928.9" fill="none" stroke="#3d98d0" stroke-width="9.3" stroke-linejoin="round"/>
<polyline points="1991.7,911.2 2009.5,911.2" fill="none" stroke="#2a6a9c" stroke-opacity=".6" stroke-width="10.5" stroke-linejoin="round"/>
<polyline points="1991.7,911.2 2009.5,911.2" fill="none" stroke="#3d98d0" stroke-width="9.3" stroke-linejoin="round"/>
<polyline points="1991.7,911.2 1991.7,946.7 2009.5,964.5" fill="none" stroke="#2a6a9c" stroke-opacity=".6" stroke-width="10.5" stroke-linejoin="round"/>
<polyline points="1991.7,911.2 1991.7,946.7 2009.5,964.5" fill="none" stroke="#3d98d0" stroke-width="9.3" stroke-linejoin="round"/>
<polyline points="1885.0,1071.2 1973.9,1071.2" fill="none" stroke="#2a6a9c" stroke-opacity=".6" stroke-width="10.5" stroke-linejoin="round"/>
<polyline points="1885.0,1071.2 1973.9,1071.2" fill="none" stroke="#3d98d0" stroke-width="9.3" stroke-linejoin="round"/>
<polyline points="1938.4,644.5 1956.2,644.5" fill="none" stroke="#b77a2c" stroke-opacity=".6" stroke-width="9.9" stroke-linejoin="round"/>
<polyline points="1938.4,644.5 1956.2,644.5" fill="none" stroke="#e39d41" stroke-width="8.7" stroke-linejoin="round"/>
<polyline points="1991.7,1000.1 2009.5,1000.1" fill="none" stroke="#b77a2c" stroke-opacity=".6" stroke-width="9.9" stroke-linejoin="round"/>
<polyline points="1991.7,1000.1 2009.5,1000.1" fill="none" stroke="#e39d41" stroke-width="8.7" stroke-linejoin="round"/>
<polyline points="2045.0,964.5 2045.0,1000.1" fill="none" stroke="#b77a2c" stroke-opacity=".6" stroke-width="9.9" stroke-linejoin="round"/>
<polyline points="2045.0,964.5 2045.0,1000.1" fill="none" stroke="#e39d41" stroke-width="8.7" stroke-linejoin="round"/>
<polyline points="1991.7,1035.6 2009.5,1035.6 2009.5,1071.2" fill="none" stroke="#b77a2c" stroke-opacity=".6" stroke-width="9.9" stroke-linejoin="round"/>
<polyline points="1991.7,1035.6 2009.5,1035.6 2009.5,1071.2" fill="none" stroke="#e39d41" stroke-width="8.7" stroke-linejoin="round"/>
<polyline points="2187.3,662.3 2187.3,946.7 2293.9,946.7" fill="none" stroke="#2a6a9c" stroke-opacity=".6" stroke-width="10.5" stroke-linejoin="round"/>
<polyline points="2187.3,662.3 2187.3,946.7 2293.9,946.7" fill="none" stroke="#3d98d0" stroke-width="9.3" stroke-linejoin="round"/>
<polyline points="2205.0,786.7 2205.0,1053.4 2258.4,1053.4" fill="none" stroke="#2a6a9c" stroke-opacity=".6" stroke-width="10.5" stroke-linejoin="round"/>
<polyline points="2205.0,786.7 2205.0,1053.4 2258.4,1053.4" fill="none" stroke="#3d98d0" stroke-width="9.3" stroke-linejoin="round"/>
<polyline points="2240.6,680.1 2240.6,875.6 2329.5,875.6 2329.5,893.4" fill="none" stroke="#2a6a9c" stroke-opacity=".6" stroke-width="10.5" stroke-linejoin="round"/>
<polyline points="2240.6,680.1 2240.6,875.6 2329.5,875.6 2329.5,893.4" fill="none" stroke="#3d98d0" stroke-width="9.3" stroke-linejoin="round"/>
<polyline points="2187.3,893.4 2293.9,893.4" fill="none" stroke="#2a6a9c" stroke-opacity=".6" stroke-width="10.5" stroke-linejoin="round"/>
<polyline points="2187.3,893.4 2293.9,893.4" fill="none" stroke="#3d98d0" stroke-width="9.3" stroke-linejoin="round"/>
<polyline points="2205.0,911.2 2240.6,911.2" fill="none" stroke="#2a6a9c" stroke-opacity=".6" stroke-width="10.5" stroke-linejoin="round"/>
<polyline points="2205.0,911.2 2240.6,911.2" fill="none" stroke="#3d98d0" stroke-width="9.3" stroke-linejoin="round"/>
<polyline points="2169.5,928.9 2240.6,928.9" fill="none" stroke="#2a6a9c" stroke-opacity=".6" stroke-width="10.5" stroke-linejoin="round"/>
<polyline points="2169.5,928.9 2240.6,928.9" fill="none" stroke="#3d98d0" stroke-width="9.3" stroke-linejoin="round"/>
<polyline points="2276.2,911.2 2293.9,911.2" fill="none" stroke="#2a6a9c" stroke-opacity=".6" stroke-width="10.5" stroke-linejoin="round"/>
<polyline points="2276.2,911.2 2293.9,911.2" fill="none" stroke="#3d98d0" stroke-width="9.3" stroke-linejoin="round"/>
<polyline points="2276.2,911.2 2276.2,946.7 2293.9,964.5" fill="none" stroke="#2a6a9c" stroke-opacity=".6" stroke-width="10.5" stroke-linejoin="round"/>
<polyline points="2276.2,911.2 2276.2,946.7 2293.9,964.5" fill="none" stroke="#3d98d0" stroke-width="9.3" stroke-linejoin="round"/>
<polyline points="2222.8,644.5 2240.6,644.5" fill="none" stroke="#b77a2c" stroke-opacity=".6" stroke-width="9.9" stroke-linejoin="round"/>
<polyline points="2222.8,644.5 2240.6,644.5" fill="none" stroke="#e39d41" stroke-width="8.7" stroke-linejoin="round"/>
<polyline points="2276.2,1000.1 2293.9,1000.1" fill="none" stroke="#b77a2c" stroke-opacity=".6" stroke-width="9.9" stroke-linejoin="round"/>
<polyline points="2276.2,1000.1 2293.9,1000.1" fill="none" stroke="#e39d41" stroke-width="8.7" stroke-linejoin="round"/>
<polyline points="2329.5,964.5 2329.5,1000.1" fill="none" stroke="#b77a2c" stroke-opacity=".6" stroke-width="9.9" stroke-linejoin="round"/>
<polyline points="2329.5,964.5 2329.5,1000.1" fill="none" stroke="#e39d41" stroke-width="8.7" stroke-linejoin="round"/>
<polyline points="2276.2,1035.6 2293.9,1035.6 2293.9,1071.2 2187.3,1071.2" fill="none" stroke="#b77a2c" stroke-opacity=".6" stroke-width="9.9" stroke-linejoin="round"/>
<polyline points="2276.2,1035.6 2293.9,1035.6 2293.9,1071.2 2187.3,1071.2" fill="none" stroke="#e39d41" stroke-width="8.7" stroke-linejoin="round"/>
<polyline points="2276.2,466.7 2347.3,466.7" fill="none" stroke="#2a6a9c" stroke-opacity=".6" stroke-width="10.5" stroke-linejoin="round"/>
<polyline points="2276.2,466.7 2347.3,466.7" fill="none" stroke="#3d98d0" stroke-width="9.3" stroke-linejoin="round"/>
<polyline points="2311.7,484.5 2347.3,484.5" fill="none" stroke="#2a6a9c" stroke-opacity=".6" stroke-width="10.5" stroke-linejoin="round"/>
<polyline points="2311.7,484.5 2347.3,484.5" fill="none" stroke="#3d98d0" stroke-width="9.3" stroke-linejoin="round"/>
<polyline points="2382.8,448.9 2382.8,466.7 2418.4,466.7" fill="none" stroke="#2a6a9c" stroke-opacity=".6" stroke-width="10.5" stroke-linejoin="round"/>
<polyline points="2382.8,448.9 2382.8,466.7 2418.4,466.7" fill="none" stroke="#3d98d0" stroke-width="9.3" stroke-linejoin="round"/>
<polyline points="2329.5,804.5 2365.0,804.5" fill="none" stroke="#2a6a9c" stroke-opacity=".6" stroke-width="10.5" stroke-linejoin="round"/>
<polyline points="2329.5,804.5 2365.0,804.5" fill="none" stroke="#3d98d0" stroke-width="9.3" stroke-linejoin="round"/>
<use href="#chv" transform="translate(1190.3 484.5) rotate(90)"/>
<use href="#chv" transform="translate(1318.9 484.5) rotate(90)"/>
<use href="#chv" transform="translate(1446.7 484.5) rotate(90)"/>
<use href="#chv" transform="translate(1575.8 484.5) rotate(90)"/>
<use href="#chv" transform="translate(1705.0 484.5) rotate(90)"/>
<use href="#chv" transform="translate(1833.0 484.5) rotate(90)"/>
<use href="#chv" transform="translate(1962.0 484.5) rotate(90)"/>
<use href="#chv" transform="translate(2090.0 484.5) rotate(90)"/>
<use href="#chv" transform="translate(2218.0 484.5) rotate(90)"/>
<use href="#chv" transform="translate(1405.0 466.7) rotate(90)"/>
<use href="#chv" transform="translate(1528.0 466.7) rotate(90)"/>
<use href="#chv" transform="translate(1653.0 466.7) rotate(90)"/>
<use href="#chv" transform="translate(1777.0 466.7) rotate(90)"/>
<use href="#chv" transform="translate(1902.0 466.7) rotate(90)"/>
<use href="#chv" transform="translate(2026.0 466.7) rotate(90)"/>
<use href="#chv" transform="translate(2150.0 466.7) rotate(90)"/>
<use href="#chv" transform="translate(2222.8 427.4) rotate(0)"/>
<use href="#chv" transform="translate(1085.0 498.0) rotate(0)"/>
<use href="#chv" transform="translate(1085.0 606.5) rotate(0)"/>
<use href="#chv" transform="translate(1085.0 655.5) rotate(0)"/>
<use href="#chv" transform="translate(1085.0 777.5) rotate(0)"/>
<use href="#chv" transform="translate(1085.0 903.0) rotate(0)"/>
<use href="#chv" transform="translate(1369.5 549.8) rotate(0)"/>
<use href="#chv" transform="translate(1369.5 611.3) rotate(0)"/>
<use href="#chv" transform="translate(1369.5 740.2) rotate(0)"/>
<use href="#chv" transform="translate(1369.5 864.0) rotate(0)"/>
<use href="#chv" transform="translate(1369.5 987.8) rotate(0)"/>
<use href="#chv" transform="translate(2222.8 608.0) rotate(0)"/>
<use href="#chv" transform="translate(2222.8 740.0) rotate(0)"/>
<use href="#chv" transform="translate(2222.8 864.0) rotate(0)"/>
<use href="#chv" transform="translate(2222.8 988.0) rotate(0)"/>
<use href="#chv" transform="translate(622.8 981.5) rotate(180)"/>
<use href="#chv" transform="translate(907.3 993.0) rotate(180)"/>
<use href="#chv" transform="translate(871.7 1054.0) rotate(0)"/>
<use href="#chv" transform="translate(1440.6 1054.0) rotate(0)"/>
<use href="#chv" transform="translate(1760.6 981.5) rotate(180)"/>
<use href="#chv" transform="translate(1725.0 1054.0) rotate(0)"/>
<use href="#chv" transform="translate(2045.0 993.0) rotate(180)"/>
<use href="#chv" transform="translate(2009.5 1054.0) rotate(0)"/>
<use href="#chv" transform="translate(2293.9 1054.0) rotate(0)"/>
<use href="#chv" transform="translate(2236.0 1071.2) rotate(90)"/>
<text x="188.0" y="668.3" font-family="Liberation Mono" font-size="19" text-anchor="middle" fill="#fff" >175</text>
<text x="239.5" y="668.3" font-family="Liberation Mono" font-size="19" text-anchor="middle" fill="#fff" >175</text>
<text x="439.0" y="668.3" font-family="Liberation Mono" font-size="19" text-anchor="middle" fill="#fff" >175</text>
<text x="523.0" y="668.3" font-family="Liberation Mono" font-size="19" text-anchor="middle" fill="#fff" >175</text>
<text x="683.0" y="668.3" font-family="Liberation Mono" font-size="19" text-anchor="middle" fill="#fff" >175</text>
<text x="789.0" y="668.3" font-family="Liberation Mono" font-size="19" text-anchor="middle" fill="#fff" >175</text>
<text x="806.0" y="668.3" font-family="Liberation Mono" font-size="19" text-anchor="middle" fill="#fff" >175</text>
<text x="968.0" y="668.3" font-family="Liberation Mono" font-size="19" text-anchor="middle" fill="#fff" >175</text>
<text x="1092.0" y="668.3" font-family="Liberation Mono" font-size="19" text-anchor="middle" fill="#fff" >175</text>
<text x="1252.0" y="668.3" font-family="Liberation Mono" font-size="19" text-anchor="middle" fill="#fff" >63</text>
<text x="1378.0" y="668.3" font-family="Liberation Mono" font-size="19" text-anchor="middle" fill="#fff" >63</text>
<text x="1537.0" y="668.3" font-family="Liberation Mono" font-size="19" text-anchor="middle" fill="#fff" >7</text>
<text x="1661.0" y="668.3" font-family="Liberation Mono" font-size="19" text-anchor="middle" fill="#fff" >7</text>
<text x="1821.0" y="668.3" font-family="Liberation Mono" font-size="19" text-anchor="middle" fill="#fff" >7</text>
<text x="1933.0" y="668.3" font-family="Liberation Mono" font-size="19" text-anchor="middle" fill="#fff" >7</text>
<text x="1945.0" y="668.3" font-family="Liberation Mono" font-size="19" text-anchor="middle" fill="#fff" >7</text>
<text x="2106.0" y="668.3" font-family="Liberation Mono" font-size="19" text-anchor="middle" fill="#fff" >7</text>
<text x="2230.0" y="668.3" font-family="Liberation Mono" font-size="19" text-anchor="middle" fill="#fff" >7</text>
<text x="2283.0" y="668.3" font-family="Liberation Mono" font-size="19" text-anchor="middle" fill="#fff" >0</text>
<text x="2407.0" y="668.3" font-family="Liberation Mono" font-size="19" text-anchor="middle" fill="#fff" >0</text>
<text x="206.0" y="792.3" font-family="Liberation Mono" font-size="19" text-anchor="middle" fill="#fff" >7</text>
<text x="345.0" y="792.3" font-family="Liberation Mono" font-size="19" text-anchor="middle" fill="#fff" >7</text>
<text x="630.0" y="792.3" font-family="Liberation Mono" font-size="19" text-anchor="middle" fill="#fff" >7</text>
<text x="914.0" y="792.3" font-family="Liberation Mono" font-size="19" text-anchor="middle" fill="#fff" >7</text>
<text x="1110.0" y="792.3" font-family="Liberation Mono" font-size="19" text-anchor="middle" fill="#fff" >7</text>
<text x="1253.0" y="792.3" font-family="Liberation Mono" font-size="19" text-anchor="middle" fill="#fff" >7</text>
<text x="1483.0" y="792.3" font-family="Liberation Mono" font-size="19" text-anchor="middle" fill="#fff" >7</text>
<text x="1768.0" y="792.3" font-family="Liberation Mono" font-size="19" text-anchor="middle" fill="#fff" >7</text>
<text x="2052.0" y="792.3" font-family="Liberation Mono" font-size="19" text-anchor="middle" fill="#fff" >7</text>
<text x="2355.0" y="792.3" font-family="Liberation Mono" font-size="19" text-anchor="middle" fill="#fff" >7</text>
<text x="249.5" y="766.3" font-family="Liberation Mono" font-size="19" text-anchor="middle" fill="#fff" >47</text>
<text x="196.0" y="801.3" font-family="Liberation Mono" font-size="19" text-anchor="middle" fill="#fff" >175</text>
<text x="534.0" y="766.3" font-family="Liberation Mono" font-size="19" text-anchor="middle" fill="#fff" >239</text>
<text x="481.0" y="801.3" font-family="Liberation Mono" font-size="19" text-anchor="middle" fill="#fff" >175</text>
<text x="818.0" y="766.3" font-family="Liberation Mono" font-size="19" text-anchor="middle" fill="#fff" >207</text>
<text x="765.0" y="801.3" font-family="Liberation Mono" font-size="19" text-anchor="middle" fill="#fff" >175</text>
<text x="1102.0" y="725.7" font-family="Liberation Mono" font-size="19" text-anchor="middle" fill="#fff" >63</text>
<text x="1050.0" y="801.3" font-family="Liberation Mono" font-size="19" text-anchor="middle" fill="#fff" >175</text>
<text x="1334.0" y="716.8" font-family="Liberation Mono" font-size="19" text-anchor="middle" fill="#fff" >63</text>
<text x="1387.0" y="766.3" font-family="Liberation Mono" font-size="19" text-anchor="middle" fill="#fff" >7</text>
<text x="1672.0" y="725.7" font-family="Liberation Mono" font-size="19" text-anchor="middle" fill="#fff" >235</text>
<text x="1619.0" y="801.3" font-family="Liberation Mono" font-size="19" text-anchor="middle" fill="#fff" >7</text>
<text x="1956.0" y="766.3" font-family="Liberation Mono" font-size="19" text-anchor="middle" fill="#fff" >249</text>
<text x="1903.0" y="801.3" font-family="Liberation Mono" font-size="19" text-anchor="middle" fill="#fff" >7</text>
<text x="2240.0" y="766.3" font-family="Liberation Mono" font-size="19" text-anchor="middle" fill="#fff" >0</text>
<text x="2188.0" y="801.3" font-family="Liberation Mono" font-size="19" text-anchor="middle" fill="#fff" >7</text>
<text x="213.5" y="890.3" font-family="Liberation Mono" font-size="19" text-anchor="middle" fill="#fff" >7</text>
<text x="295.1" y="898.0" font-family="Liberation Mono" font-size="19" text-anchor="middle" fill="#fff" >175</text>
<text x="239.1" y="916.0" font-family="Liberation Mono" font-size="19" text-anchor="middle" fill="#fff" >7</text>
<text x="191.1" y="934.8" font-family="Liberation Mono" font-size="19" text-anchor="middle" fill="#fff" >7</text>
<text x="196.8" y="943.0" font-family="Liberation Mono" font-size="19" text-anchor="middle" fill="#fff" >175</text>
<text x="295.1" y="953.0" font-family="Liberation Mono" font-size="19" text-anchor="middle" fill="#fff" >175</text>
<text x="331.5" y="881.3" font-family="Liberation Mono" font-size="19" text-anchor="middle" fill="#fff" >47</text>
<text x="284.1" y="923.0" font-family="Liberation Mono" font-size="19" text-anchor="middle" fill="#fff" >128</text>
<text x="213.5" y="1045.1" font-family="Liberation Mono" font-size="19" text-anchor="middle" fill="#fff" >7</text>
<text x="257.1" y="1059.3" font-family="Liberation Mono" font-size="19" text-anchor="middle" fill="#fff" >7</text>
<text x="186.1" y="1077.3" font-family="Liberation Mono" font-size="19" text-anchor="middle" fill="#fff" >2</text>
<text x="498.0" y="890.3" font-family="Liberation Mono" font-size="19" text-anchor="middle" fill="#fff" >7</text>
<text x="579.6" y="898.0" font-family="Liberation Mono" font-size="19" text-anchor="middle" fill="#fff" >175</text>
<text x="523.6" y="916.0" font-family="Liberation Mono" font-size="19" text-anchor="middle" fill="#fff" >7</text>
<text x="524.1" y="934.8" font-family="Liberation Mono" font-size="19" text-anchor="middle" fill="#fff" >6</text>
<text x="481.3" y="943.0" font-family="Liberation Mono" font-size="19" text-anchor="middle" fill="#fff" >175</text>
<text x="579.6" y="953.0" font-family="Liberation Mono" font-size="19" text-anchor="middle" fill="#fff" >175</text>
<text x="616.0" y="881.3" font-family="Liberation Mono" font-size="19" text-anchor="middle" fill="#fff" >239</text>
<text x="568.6" y="923.0" font-family="Liberation Mono" font-size="19" text-anchor="middle" fill="#fff" >192</text>
<text x="541.6" y="1059.3" font-family="Liberation Mono" font-size="19" text-anchor="middle" fill="#fff" >7</text>
<text x="470.6" y="1077.3" font-family="Liberation Mono" font-size="19" text-anchor="middle" fill="#fff" >4</text>
<text x="782.4" y="890.3" font-family="Liberation Mono" font-size="19" text-anchor="middle" fill="#fff" >7</text>
<text x="850.0" y="898.0" font-family="Liberation Mono" font-size="19" text-anchor="middle" fill="#fff" >175</text>
<text x="808.0" y="916.0" font-family="Liberation Mono" font-size="19" text-anchor="middle" fill="#fff" >7</text>
<text x="808.5" y="934.8" font-family="Liberation Mono" font-size="19" text-anchor="middle" fill="#fff" >5</text>
<text x="765.7" y="943.0" font-family="Liberation Mono" font-size="19" text-anchor="middle" fill="#fff" >175</text>
<text x="864.0" y="953.0" font-family="Liberation Mono" font-size="19" text-anchor="middle" fill="#fff" >175</text>
<text x="900.4" y="881.3" font-family="Liberation Mono" font-size="19" text-anchor="middle" fill="#fff" >207</text>
<text x="853.0" y="923.0" font-family="Liberation Mono" font-size="19" text-anchor="middle" fill="#fff" >224</text>
<text x="826.0" y="1059.3" font-family="Liberation Mono" font-size="19" text-anchor="middle" fill="#fff" >7</text>
<text x="755.0" y="1077.3" font-family="Liberation Mono" font-size="19" text-anchor="middle" fill="#fff" >8</text>
<text x="1066.8" y="890.3" font-family="Liberation Mono" font-size="19" text-anchor="middle" fill="#fff" >7</text>
<text x="1134.4" y="898.0" font-family="Liberation Mono" font-size="19" text-anchor="middle" fill="#fff" >175</text>
<text x="1092.4" y="916.0" font-family="Liberation Mono" font-size="19" text-anchor="middle" fill="#fff" >7</text>
<text x="1044.4" y="934.8" font-family="Liberation Mono" font-size="19" text-anchor="middle" fill="#fff" >4</text>
<text x="1050.1" y="943.0" font-family="Liberation Mono" font-size="19" text-anchor="middle" fill="#fff" >175</text>
<text x="1148.4" y="953.0" font-family="Liberation Mono" font-size="19" text-anchor="middle" fill="#fff" >175</text>
<text x="1184.8" y="881.3" font-family="Liberation Mono" font-size="19" text-anchor="middle" fill="#fff" >63</text>
<text x="1137.4" y="923.0" font-family="Liberation Mono" font-size="19" text-anchor="middle" fill="#fff" >112</text>
<text x="1066.8" y="1045.1" font-family="Liberation Mono" font-size="19" text-anchor="middle" fill="#fff" >7</text>
<text x="1110.4" y="1059.3" font-family="Liberation Mono" font-size="19" text-anchor="middle" fill="#fff" >7</text>
<text x="1112.1" y="1077.3" font-family="Liberation Mono" font-size="19" text-anchor="middle" fill="#fff" >16</text>
<text x="1351.3" y="890.3" font-family="Liberation Mono" font-size="19" text-anchor="middle" fill="#fff" >7</text>
<text x="1432.9" y="898.0" font-family="Liberation Mono" font-size="19" text-anchor="middle" fill="#fff" >63</text>
<text x="1376.9" y="916.0" font-family="Liberation Mono" font-size="19" text-anchor="middle" fill="#fff" >7</text>
<text x="1377.4" y="934.8" font-family="Liberation Mono" font-size="19" text-anchor="middle" fill="#fff" >3</text>
<text x="1334.6" y="943.0" font-family="Liberation Mono" font-size="19" text-anchor="middle" fill="#fff" >63</text>
<text x="1432.9" y="953.0" font-family="Liberation Mono" font-size="19" text-anchor="middle" fill="#fff" >63</text>
<text x="1469.3" y="881.3" font-family="Liberation Mono" font-size="19" text-anchor="middle" fill="#fff" >7</text>
<text x="1421.9" y="923.0" font-family="Liberation Mono" font-size="19" text-anchor="middle" fill="#fff" >56</text>
<text x="1351.3" y="1045.1" font-family="Liberation Mono" font-size="19" text-anchor="middle" fill="#fff" >7</text>
<text x="1394.9" y="1059.3" font-family="Liberation Mono" font-size="19" text-anchor="middle" fill="#fff" >7</text>
<text x="1323.9" y="1077.3" font-family="Liberation Mono" font-size="19" text-anchor="middle" fill="#fff" >32</text>
<text x="1635.7" y="890.3" font-family="Liberation Mono" font-size="19" text-anchor="middle" fill="#fff" >7</text>
<text x="1717.3" y="898.0" font-family="Liberation Mono" font-size="19" text-anchor="middle" fill="#fff" >7</text>
<text x="1661.3" y="916.0" font-family="Liberation Mono" font-size="19" text-anchor="middle" fill="#fff" >7</text>
<text x="1661.8" y="934.8" font-family="Liberation Mono" font-size="19" text-anchor="middle" fill="#fff" >2</text>
<text x="1619.0" y="943.0" font-family="Liberation Mono" font-size="19" text-anchor="middle" fill="#fff" >7</text>
<text x="1717.3" y="953.0" font-family="Liberation Mono" font-size="19" text-anchor="middle" fill="#fff" >7</text>
<text x="1753.7" y="881.3" font-family="Liberation Mono" font-size="19" text-anchor="middle" fill="#fff" >235</text>
<text x="1706.3" y="923.0" font-family="Liberation Mono" font-size="19" text-anchor="middle" fill="#fff" >28</text>
<text x="1635.7" y="1045.1" font-family="Liberation Mono" font-size="19" text-anchor="middle" fill="#fff" >7</text>
<text x="1679.3" y="1059.3" font-family="Liberation Mono" font-size="19" text-anchor="middle" fill="#fff" >7</text>
<text x="1608.3" y="1077.3" font-family="Liberation Mono" font-size="19" text-anchor="middle" fill="#fff" >64</text>
<text x="1920.2" y="890.3" font-family="Liberation Mono" font-size="19" text-anchor="middle" fill="#fff" >7</text>
<text x="2001.8" y="898.0" font-family="Liberation Mono" font-size="19" text-anchor="middle" fill="#fff" >7</text>
<text x="1945.8" y="916.0" font-family="Liberation Mono" font-size="19" text-anchor="middle" fill="#fff" >7</text>
<text x="1897.8" y="934.8" font-family="Liberation Mono" font-size="19" text-anchor="middle" fill="#fff" >1</text>
<text x="1903.5" y="943.0" font-family="Liberation Mono" font-size="19" text-anchor="middle" fill="#fff" >7</text>
<text x="1988.1" y="953.0" font-family="Liberation Mono" font-size="19" text-anchor="middle" fill="#fff" >7</text>
<text x="1961.8" y="881.3" font-family="Liberation Mono" font-size="19" text-anchor="middle" fill="#fff" >249</text>
<text x="1990.8" y="923.0" font-family="Liberation Mono" font-size="19" text-anchor="middle" fill="#fff" >14</text>
<text x="1920.2" y="1045.1" font-family="Liberation Mono" font-size="19" text-anchor="middle" fill="#fff" >7</text>
<text x="1963.8" y="1059.3" font-family="Liberation Mono" font-size="19" text-anchor="middle" fill="#fff" >7</text>
<text x="1892.8" y="1077.3" font-family="Liberation Mono" font-size="19" text-anchor="middle" fill="#fff" >128</text>
<text x="2204.6" y="890.3" font-family="Liberation Mono" font-size="19" text-anchor="middle" fill="#fff" >7</text>
<text x="2286.2" y="898.0" font-family="Liberation Mono" font-size="19" text-anchor="middle" fill="#fff" >7</text>
<text x="2230.2" y="916.0" font-family="Liberation Mono" font-size="19" text-anchor="middle" fill="#fff" >7</text>
<text x="2230.7" y="934.8" font-family="Liberation Mono" font-size="19" text-anchor="middle" fill="#fff" >0</text>
<text x="2187.9" y="929.3" font-family="Liberation Mono" font-size="19" text-anchor="middle" fill="#fff" >7</text>
<text x="2286.2" y="953.0" font-family="Liberation Mono" font-size="19" text-anchor="middle" fill="#fff" >7</text>
<text x="2322.6" y="881.3" font-family="Liberation Mono" font-size="19" text-anchor="middle" fill="#fff" >0</text>
<text x="2275.2" y="923.0" font-family="Liberation Mono" font-size="19" text-anchor="middle" fill="#fff" >7</text>
<text x="2204.6" y="1045.1" font-family="Liberation Mono" font-size="19" text-anchor="middle" fill="#fff" >7</text>
<text x="2248.2" y="1059.3" font-family="Liberation Mono" font-size="19" text-anchor="middle" fill="#fff" >7</text>
<text x="2336.0" y="490.3" font-family="Liberation Mono" font-size="19" text-anchor="middle" fill="#fff" >0</text>
<text x="2337.5" y="472.8" font-family="Liberation Mono" font-size="19" text-anchor="middle" fill="#fff" >25</text>
<text x="2397.0" y="472.8" font-family="Liberation Mono" font-size="19" text-anchor="middle" fill="#fff" >25</text>
<text x="2355.0" y="810.8" font-family="Liberation Mono" font-size="19" text-anchor="middle" fill="#fff" >0</text>
<circle cx="196.2" cy="662.3" r="5.45" fill="#33465e" stroke="#3d98d0" stroke-width="3.4"/>
<circle cx="213.9" cy="786.7" r="5.45" fill="#33465e" stroke="#3d98d0" stroke-width="3.4"/>
<circle cx="196.2" cy="893.4" r="5.45" fill="#33465e" stroke="#3d98d0" stroke-width="3.4"/>
<circle cx="213.9" cy="911.2" r="5.45" fill="#33465e" stroke="#3d98d0" stroke-width="3.4"/>
<circle cx="196.2" cy="946.7" r="5.45" fill="#33465e" stroke="#3d98d0" stroke-width="3.4"/>
<circle cx="213.9" cy="1053.4" r="5.45" fill="#33465e" stroke="#3d98d0" stroke-width="3.4"/>
<circle cx="249.5" cy="875.6" r="5.45" fill="#33465e" stroke="#3d98d0" stroke-width="3.4"/>
<circle cx="338.4" cy="875.6" r="5.45" fill="#33465e" stroke="#3d98d0" stroke-width="3.4"/>
<circle cx="231.7" cy="537.8" r="5.45" fill="#33465e" stroke="#e39d41" stroke-width="3.4"/>
<circle cx="231.7" cy="591.2" r="5.45" fill="#33465e" stroke="#e39d41" stroke-width="3.4"/>
<circle cx="231.7" cy="644.5" r="5.45" fill="#33465e" stroke="#e39d41" stroke-width="3.4"/>
<circle cx="302.8" cy="1035.6" r="5.45" fill="#33465e" stroke="#e39d41" stroke-width="3.4"/>
<circle cx="249.5" cy="644.5" r="5.5" fill="#e37a8b" stroke="#e39d41" stroke-width="2.6"/>
<circle cx="249.5" cy="662.3" r="5.5" fill="#2e8b3a" stroke="#3d98d0" stroke-width="2.6"/>
<circle cx="249.5" cy="680.1" r="5.5" fill="#2e8b3a" stroke="#3d98d0" stroke-width="2.6"/>
<circle cx="285.0" cy="662.3" r="5.5" fill="#2e8b3a" stroke="#3d98d0" stroke-width="2.6"/>
<circle cx="302.8" cy="893.4" r="5.5" fill="#2e8b3a" stroke="#3d98d0" stroke-width="2.6"/>
<circle cx="338.4" cy="893.4" r="5.5" fill="#2e8b3a" stroke="#3d98d0" stroke-width="2.6"/>
<circle cx="249.5" cy="911.2" r="5.5" fill="#2e8b3a" stroke="#3d98d0" stroke-width="2.6"/>
<circle cx="285.0" cy="911.2" r="5.5" fill="#2e8b3a" stroke="#3d98d0" stroke-width="2.6"/>
<circle cx="302.8" cy="911.2" r="5.5" fill="#2e8b3a" stroke="#3d98d0" stroke-width="2.6"/>
<circle cx="178.4" cy="928.9" r="5.5" fill="#2e8b3a" stroke="#3d98d0" stroke-width="2.6"/>
<circle cx="249.5" cy="928.9" r="5.5" fill="#2e8b3a" stroke="#3d98d0" stroke-width="2.6"/>
<circle cx="302.8" cy="946.7" r="5.5" fill="#2e8b3a" stroke="#3d98d0" stroke-width="2.6"/>
<circle cx="302.8" cy="964.5" r="5.5" fill="#2e8b3a" stroke="#3d98d0" stroke-width="2.6"/>
<circle cx="338.4" cy="964.5" r="5.5" fill="#e83f5e" stroke="#e39d41" stroke-width="2.6"/>
<circle cx="338.4" cy="1000.1" r="5.5" fill="#e37a8b" stroke="#e39d41" stroke-width="2.6"/>
<circle cx="302.8" cy="1000.1" r="5.5" fill="#2e8b3a" stroke="#e39d41" stroke-width="2.6"/>
<circle cx="285.0" cy="1000.1" r="5.5" fill="#2e8b3a" stroke="#e39d41" stroke-width="2.6"/>
<circle cx="285.0" cy="1035.6" r="5.5" fill="#e37a8b" stroke="#e39d41" stroke-width="2.6"/>
<circle cx="231.7" cy="1017.8" r="5.5" fill="#e83f5e" stroke="#e39d41" stroke-width="2.6"/>
<circle cx="267.3" cy="1053.4" r="5.5" fill="#2e8b3a" stroke="#3d98d0" stroke-width="2.6"/>
<circle cx="267.3" cy="1071.2" r="5.5" fill="#2e8b3a" stroke="#3d98d0" stroke-width="2.6"/>
<circle cx="178.4" cy="1071.2" r="5.5" fill="#2e8b3a" stroke="#3d98d0" stroke-width="2.6"/>
<circle cx="302.8" cy="1071.2" r="5.5" fill="#e83f5e" stroke="#e39d41" stroke-width="2.6"/>
<use href="#col" transform="translate(0.0 0)"/>
<use href="#cst" x="160.6" y="1070.8"/>
<use href="#ult2" transform="translate(-35.6 106.7)"/>
<use href="#colTop" transform="translate(0.0 0)"/>
<use href="#ultT" transform="translate(-35.6 106.7)"/>
<use href="#bdg" x="296.3" y="1046.9"/>
<use href="#bdg" x="173.0" y="1053.8"/>
<text x="158.2" y="933.6" font-family="Liberation Serif" font-size="16" text-anchor="middle" fill="#fff" stroke="#fff" stroke-width=".4">7</text>
<text x="158.6" y="1076.3" font-family="Liberation Serif" font-size="16" text-anchor="middle" fill="#fff" stroke="#fff" stroke-width=".4">2</text>
<circle cx="480.6" cy="662.3" r="5.45" fill="#33465e" stroke="#3d98d0" stroke-width="3.4"/>
<circle cx="498.4" cy="786.7" r="5.45" fill="#33465e" stroke="#3d98d0" stroke-width="3.4"/>
<circle cx="480.6" cy="893.4" r="5.45" fill="#33465e" stroke="#3d98d0" stroke-width="3.4"/>
<circle cx="498.4" cy="911.2" r="5.45" fill="#33465e" stroke="#3d98d0" stroke-width="3.4"/>
<circle cx="480.6" cy="946.7" r="5.45" fill="#33465e" stroke="#3d98d0" stroke-width="3.4"/>
<circle cx="498.4" cy="1053.4" r="5.45" fill="#33465e" stroke="#3d98d0" stroke-width="3.4"/>
<circle cx="533.9" cy="875.6" r="5.45" fill="#33465e" stroke="#3d98d0" stroke-width="3.4"/>
<circle cx="622.8" cy="875.6" r="5.45" fill="#33465e" stroke="#3d98d0" stroke-width="3.4"/>
<circle cx="516.2" cy="520.1" r="5.45" fill="#33465e" stroke="#e39d41" stroke-width="3.4"/>
<circle cx="516.2" cy="591.2" r="5.45" fill="#33465e" stroke="#e39d41" stroke-width="3.4"/>
<circle cx="516.2" cy="644.5" r="5.45" fill="#33465e" stroke="#e39d41" stroke-width="3.4"/>
<circle cx="587.3" cy="1035.6" r="5.45" fill="#33465e" stroke="#e39d41" stroke-width="3.4"/>
<circle cx="533.9" cy="644.5" r="5.5" fill="#e37a8b" stroke="#e39d41" stroke-width="2.6"/>
<circle cx="533.9" cy="662.3" r="5.5" fill="#2e8b3a" stroke="#3d98d0" stroke-width="2.6"/>
<circle cx="533.9" cy="680.1" r="5.5" fill="#2e8b3a" stroke="#3d98d0" stroke-width="2.6"/>
<circle cx="569.5" cy="662.3" r="5.5" fill="#2e8b3a" stroke="#3d98d0" stroke-width="2.6"/>
<circle cx="587.3" cy="893.4" r="5.5" fill="#2e8b3a" stroke="#3d98d0" stroke-width="2.6"/>
<circle cx="622.8" cy="893.4" r="5.5" fill="#2e8b3a" stroke="#3d98d0" stroke-width="2.6"/>
<circle cx="533.9" cy="911.2" r="5.5" fill="#2e8b3a" stroke="#3d98d0" stroke-width="2.6"/>
<circle cx="569.5" cy="911.2" r="5.5" fill="#2e8b3a" stroke="#3d98d0" stroke-width="2.6"/>
<circle cx="587.3" cy="911.2" r="5.5" fill="#2e8b3a" stroke="#3d98d0" stroke-width="2.6"/>
<circle cx="462.8" cy="928.9" r="5.5" fill="#2e8b3a" stroke="#3d98d0" stroke-width="2.6"/>
<circle cx="533.9" cy="928.9" r="5.5" fill="#2e8b3a" stroke="#3d98d0" stroke-width="2.6"/>
<circle cx="587.3" cy="946.7" r="5.5" fill="#2e8b3a" stroke="#3d98d0" stroke-width="2.6"/>
<circle cx="587.3" cy="964.5" r="5.5" fill="#2e8b3a" stroke="#3d98d0" stroke-width="2.6"/>
<circle cx="622.8" cy="964.5" r="5.5" fill="#2e8b3a" stroke="#e39d41" stroke-width="2.6"/>
<circle cx="622.8" cy="1000.1" r="5.5" fill="#2e8b3a" stroke="#e39d41" stroke-width="2.6"/>
<circle cx="587.3" cy="1000.1" r="5.5" fill="#e83f5e" stroke="#e39d41" stroke-width="2.6"/>
<circle cx="569.5" cy="1000.1" r="5.5" fill="#e37a8b" stroke="#e39d41" stroke-width="2.6"/>
<circle cx="569.5" cy="1035.6" r="5.5" fill="#e37a8b" stroke="#e39d41" stroke-width="2.6"/>
<circle cx="516.2" cy="1017.8" r="5.5" fill="#e83f5e" stroke="#e39d41" stroke-width="2.6"/>
<circle cx="551.7" cy="1053.4" r="5.5" fill="#2e8b3a" stroke="#3d98d0" stroke-width="2.6"/>
<circle cx="551.7" cy="1071.2" r="5.5" fill="#2e8b3a" stroke="#3d98d0" stroke-width="2.6"/>
<circle cx="462.8" cy="1071.2" r="5.5" fill="#2e8b3a" stroke="#3d98d0" stroke-width="2.6"/>
<circle cx="587.3" cy="1071.2" r="5.5" fill="#e83f5e" stroke="#e39d41" stroke-width="2.6"/>
<use href="#col" transform="translate(284.4 0)"/>
<use href="#cst" x="445.0" y="1070.8"/>
<use href="#ult2" transform="translate(248.9 106.7)"/>
<use href="#colTop" transform="translate(284.4 0)"/>
<use href="#ultT" transform="translate(248.9 106.7)"/>
<use href="#bdg" x="580.8" y="1046.9"/>
<use href="#bdg" x="457.4" y="1053.8"/>
<text x="442.7" y="933.6" font-family="Liberation Serif" font-size="16" text-anchor="middle" fill="#fff" stroke="#fff" stroke-width=".4">6</text>
<text x="443.1" y="1076.3" font-family="Liberation Serif" font-size="16" text-anchor="middle" fill="#fff" stroke="#fff" stroke-width=".4">4</text>
<circle cx="765.0" cy="662.3" r="5.45" fill="#33465e" stroke="#3d98d0" stroke-width="3.4"/>
<circle cx="782.8" cy="786.7" r="5.45" fill="#33465e" stroke="#3d98d0" stroke-width="3.4"/>
<circle cx="765.0" cy="893.4" r="5.45" fill="#33465e" stroke="#3d98d0" stroke-width="3.4"/>
<circle cx="782.8" cy="911.2" r="5.45" fill="#33465e" stroke="#3d98d0" stroke-width="3.4"/>
<circle cx="765.0" cy="946.7" r="5.45" fill="#33465e" stroke="#3d98d0" stroke-width="3.4"/>
<circle cx="782.8" cy="1053.4" r="5.45" fill="#33465e" stroke="#3d98d0" stroke-width="3.4"/>
<circle cx="818.4" cy="875.6" r="5.45" fill="#33465e" stroke="#3d98d0" stroke-width="3.4"/>
<circle cx="907.3" cy="875.6" r="5.45" fill="#33465e" stroke="#3d98d0" stroke-width="3.4"/>
<circle cx="800.6" cy="502.3" r="5.45" fill="#33465e" stroke="#e39d41" stroke-width="3.4"/>
<circle cx="800.6" cy="591.2" r="5.45" fill="#33465e" stroke="#e39d41" stroke-width="3.4"/>
<circle cx="800.6" cy="644.5" r="5.45" fill="#33465e" stroke="#e39d41" stroke-width="3.4"/>
<circle cx="871.7" cy="1035.6" r="5.45" fill="#33465e" stroke="#e39d41" stroke-width="3.4"/>
<circle cx="818.4" cy="644.5" r="5.5" fill="#e37a8b" stroke="#e39d41" stroke-width="2.6"/>
<circle cx="818.4" cy="662.3" r="5.5" fill="#2e8b3a" stroke="#3d98d0" stroke-width="2.6"/>
<circle cx="818.4" cy="680.1" r="5.5" fill="#2e8b3a" stroke="#3d98d0" stroke-width="2.6"/>
<circle cx="853.9" cy="662.3" r="5.5" fill="#2e8b3a" stroke="#3d98d0" stroke-width="2.6"/>
<circle cx="871.7" cy="893.4" r="5.5" fill="#2e8b3a" stroke="#3d98d0" stroke-width="2.6"/>
<circle cx="907.3" cy="893.4" r="5.5" fill="#2e8b3a" stroke="#3d98d0" stroke-width="2.6"/>
<circle cx="818.4" cy="911.2" r="5.5" fill="#2e8b3a" stroke="#3d98d0" stroke-width="2.6"/>
<circle cx="853.9" cy="911.2" r="5.5" fill="#2e8b3a" stroke="#3d98d0" stroke-width="2.6"/>
<circle cx="871.7" cy="911.2" r="5.5" fill="#2e8b3a" stroke="#3d98d0" stroke-width="2.6"/>
<circle cx="747.3" cy="928.9" r="5.5" fill="#2e8b3a" stroke="#3d98d0" stroke-width="2.6"/>
<circle cx="818.4" cy="928.9" r="5.5" fill="#2e8b3a" stroke="#3d98d0" stroke-width="2.6"/>
<circle cx="871.7" cy="946.7" r="5.5" fill="#2e8b3a" stroke="#3d98d0" stroke-width="2.6"/>
<circle cx="871.7" cy="964.5" r="5.5" fill="#2e8b3a" stroke="#3d98d0" stroke-width="2.6"/>
<circle cx="907.3" cy="964.5" r="5.5" fill="#2e8b3a" stroke="#e39d41" stroke-width="2.6"/>
<circle cx="907.3" cy="1000.1" r="5.5" fill="#2e8b3a" stroke="#e39d41" stroke-width="2.6"/>
<circle cx="871.7" cy="1000.1" r="5.5" fill="#e83f5e" stroke="#e39d41" stroke-width="2.6"/>
<circle cx="853.9" cy="1000.1" r="5.5" fill="#e37a8b" stroke="#e39d41" stroke-width="2.6"/>
<circle cx="853.9" cy="1035.6" r="5.5" fill="#2e8b3a" stroke="#e39d41" stroke-width="2.6"/>
<circle cx="800.6" cy="1017.8" r="5.5" fill="#e83f5e" stroke="#e39d41" stroke-width="2.6"/>
<circle cx="836.2" cy="1053.4" r="5.5" fill="#2e8b3a" stroke="#3d98d0" stroke-width="2.6"/>
<circle cx="836.2" cy="1071.2" r="5.5" fill="#2e8b3a" stroke="#3d98d0" stroke-width="2.6"/>
<circle cx="747.3" cy="1071.2" r="5.5" fill="#2e8b3a" stroke="#3d98d0" stroke-width="2.6"/>
<circle cx="871.7" cy="1071.2" r="5.5" fill="#2e8b3a" stroke="#e39d41" stroke-width="2.6"/>
<use href="#col" transform="translate(568.9 0)"/>
<use href="#cst" x="729.5" y="1070.8"/>
<use href="#ult2" transform="translate(533.3 106.7)"/>
<use href="#colTop" transform="translate(568.9 0)"/>
<use href="#ultT" transform="translate(533.3 106.7)"/>
<use href="#bdg" x="865.2" y="1046.9"/>
<use href="#bdg" x="741.9" y="1053.8"/>
<text x="727.1" y="933.6" font-family="Liberation Serif" font-size="16" text-anchor="middle" fill="#fff" stroke="#fff" stroke-width=".4">5</text>
<text x="727.5" y="1076.3" font-family="Liberation Serif" font-size="16" text-anchor="middle" fill="#fff" stroke="#fff" stroke-width=".4">8</text>
<circle cx="1049.5" cy="662.3" r="5.45" fill="#33465e" stroke="#3d98d0" stroke-width="3.4"/>
<circle cx="1067.3" cy="786.7" r="5.45" fill="#33465e" stroke="#3d98d0" stroke-width="3.4"/>
<circle cx="1049.5" cy="893.4" r="5.45" fill="#33465e" stroke="#3d98d0" stroke-width="3.4"/>
<circle cx="1067.3" cy="911.2" r="5.45" fill="#33465e" stroke="#3d98d0" stroke-width="3.4"/>
<circle cx="1049.5" cy="946.7" r="5.45" fill="#33465e" stroke="#3d98d0" stroke-width="3.4"/>
<circle cx="1067.3" cy="1053.4" r="5.45" fill="#33465e" stroke="#3d98d0" stroke-width="3.4"/>
<circle cx="1102.8" cy="875.6" r="5.45" fill="#33465e" stroke="#3d98d0" stroke-width="3.4"/>
<circle cx="1191.7" cy="875.6" r="5.45" fill="#33465e" stroke="#3d98d0" stroke-width="3.4"/>
<circle cx="1120.6" cy="786.7" r="5.45" fill="#33465e" stroke="#3d98d0" stroke-width="3.4"/>
<circle cx="1085.0" cy="484.5" r="5.45" fill="#33465e" stroke="#e39d41" stroke-width="3.4"/>
<circle cx="1085.0" cy="591.2" r="5.45" fill="#33465e" stroke="#e39d41" stroke-width="3.4"/>
<circle cx="1085.0" cy="644.5" r="5.45" fill="#33465e" stroke="#e39d41" stroke-width="3.4"/>
<circle cx="1156.2" cy="1035.6" r="5.45" fill="#33465e" stroke="#e39d41" stroke-width="3.4"/>
<circle cx="1102.8" cy="644.5" r="5.5" fill="#2e8b3a" stroke="#e39d41" stroke-width="2.6"/>
<circle cx="1102.8" cy="662.3" r="5.5" fill="#2e8b3a" stroke="#3d98d0" stroke-width="2.6"/>
<circle cx="1102.8" cy="680.1" r="5.5" fill="#2e8b3a" stroke="#3d98d0" stroke-width="2.6"/>
<circle cx="1138.4" cy="662.3" r="5.5" fill="#2e8b3a" stroke="#3d98d0" stroke-width="2.6"/>
<circle cx="1156.2" cy="893.4" r="5.5" fill="#2e8b3a" stroke="#3d98d0" stroke-width="2.6"/>
<circle cx="1191.7" cy="893.4" r="5.5" fill="#2e8b3a" stroke="#3d98d0" stroke-width="2.6"/>
<circle cx="1102.8" cy="911.2" r="5.5" fill="#2e8b3a" stroke="#3d98d0" stroke-width="2.6"/>
<circle cx="1138.4" cy="911.2" r="5.5" fill="#2e8b3a" stroke="#3d98d0" stroke-width="2.6"/>
<circle cx="1156.2" cy="911.2" r="5.5" fill="#2e8b3a" stroke="#3d98d0" stroke-width="2.6"/>
<circle cx="1031.7" cy="928.9" r="5.5" fill="#2e8b3a" stroke="#3d98d0" stroke-width="2.6"/>
<circle cx="1102.8" cy="928.9" r="5.5" fill="#2e8b3a" stroke="#3d98d0" stroke-width="2.6"/>
<circle cx="1156.2" cy="946.7" r="5.5" fill="#2e8b3a" stroke="#3d98d0" stroke-width="2.6"/>
<circle cx="1156.2" cy="964.5" r="5.5" fill="#2e8b3a" stroke="#3d98d0" stroke-width="2.6"/>
<circle cx="1191.7" cy="964.5" r="5.5" fill="#e83f5e" stroke="#e39d41" stroke-width="2.6"/>
<circle cx="1191.7" cy="1000.1" r="5.5" fill="#e37a8b" stroke="#e39d41" stroke-width="2.6"/>
<circle cx="1156.2" cy="1000.1" r="5.5" fill="#2e8b3a" stroke="#e39d41" stroke-width="2.6"/>
<circle cx="1138.4" cy="1000.1" r="5.5" fill="#2e8b3a" stroke="#e39d41" stroke-width="2.6"/>
<circle cx="1138.4" cy="1035.6" r="5.5" fill="#2e8b3a" stroke="#e39d41" stroke-width="2.6"/>
<circle cx="1085.0" cy="1017.8" r="5.5" fill="#2e8b3a" stroke="#e39d41" stroke-width="2.6"/>
<circle cx="1120.6" cy="1053.4" r="5.5" fill="#2e8b3a" stroke="#3d98d0" stroke-width="2.6"/>
<circle cx="1120.6" cy="1071.2" r="5.5" fill="#2e8b3a" stroke="#3d98d0" stroke-width="2.6"/>
<circle cx="1031.7" cy="1071.2" r="5.5" fill="#2e8b3a" stroke="#3d98d0" stroke-width="2.6"/>
<circle cx="1156.2" cy="1071.2" r="5.5" fill="#2e8b3a" stroke="#e39d41" stroke-width="2.6"/>
<use href="#col" transform="translate(853.3 0)"/>
<use href="#cst" x="1013.9" y="1070.8"/>
<use href="#ult2" transform="translate(817.8 106.7)"/>
<use href="#colTop" transform="translate(853.3 0)"/>
<use href="#ultT" transform="translate(817.8 106.7)"/>
<use href="#bdg" x="1149.6" y="1046.9"/>
<use href="#bdg" x="1026.3" y="1053.8"/>
<text x="1011.5" y="933.6" font-family="Liberation Serif" font-size="16" text-anchor="middle" fill="#fff" stroke="#fff" stroke-width=".4">4</text>
<text x="1011.9" y="1076.3" font-family="Liberation Mono" font-size="16" text-anchor="middle" fill="#fff" stroke="#fff" stroke-width=".4">16</text>
<circle cx="1333.9" cy="662.3" r="5.45" fill="#33465e" stroke="#3d98d0" stroke-width="3.4"/>
<circle cx="1351.7" cy="786.7" r="5.45" fill="#33465e" stroke="#3d98d0" stroke-width="3.4"/>
<circle cx="1333.9" cy="893.4" r="5.45" fill="#33465e" stroke="#3d98d0" stroke-width="3.4"/>
<circle cx="1351.7" cy="911.2" r="5.45" fill="#33465e" stroke="#3d98d0" stroke-width="3.4"/>
<circle cx="1333.9" cy="946.7" r="5.45" fill="#33465e" stroke="#3d98d0" stroke-width="3.4"/>
<circle cx="1351.7" cy="1053.4" r="5.45" fill="#33465e" stroke="#3d98d0" stroke-width="3.4"/>
<circle cx="1387.3" cy="875.6" r="5.45" fill="#33465e" stroke="#3d98d0" stroke-width="3.4"/>
<circle cx="1476.2" cy="875.6" r="5.45" fill="#33465e" stroke="#3d98d0" stroke-width="3.4"/>
<circle cx="1369.5" cy="466.7" r="5.45" fill="#33465e" stroke="#e39d41" stroke-width="3.4"/>
<circle cx="1369.5" cy="591.2" r="5.45" fill="#33465e" stroke="#e39d41" stroke-width="3.4"/>
<circle cx="1369.5" cy="644.5" r="5.45" fill="#33465e" stroke="#e39d41" stroke-width="3.4"/>
<circle cx="1440.6" cy="1035.6" r="5.45" fill="#33465e" stroke="#e39d41" stroke-width="3.4"/>
<circle cx="1387.3" cy="644.5" r="5.5" fill="#2e8b3a" stroke="#e39d41" stroke-width="2.6"/>
<circle cx="1387.3" cy="662.3" r="5.5" fill="#2e8b3a" stroke="#3d98d0" stroke-width="2.6"/>
<circle cx="1387.3" cy="680.1" r="5.5" fill="#2e8b3a" stroke="#3d98d0" stroke-width="2.6"/>
<circle cx="1422.8" cy="662.3" r="5.5" fill="#2e8b3a" stroke="#3d98d0" stroke-width="2.6"/>
<circle cx="1440.6" cy="893.4" r="5.5" fill="#2e8b3a" stroke="#3d98d0" stroke-width="2.6"/>
<circle cx="1476.2" cy="893.4" r="5.5" fill="#2e8b3a" stroke="#3d98d0" stroke-width="2.6"/>
<circle cx="1387.3" cy="911.2" r="5.5" fill="#2e8b3a" stroke="#3d98d0" stroke-width="2.6"/>
<circle cx="1422.8" cy="911.2" r="5.5" fill="#2e8b3a" stroke="#3d98d0" stroke-width="2.6"/>
<circle cx="1440.6" cy="911.2" r="5.5" fill="#2e8b3a" stroke="#3d98d0" stroke-width="2.6"/>
<circle cx="1316.2" cy="928.9" r="5.5" fill="#2e8b3a" stroke="#3d98d0" stroke-width="2.6"/>
<circle cx="1387.3" cy="928.9" r="5.5" fill="#2e8b3a" stroke="#3d98d0" stroke-width="2.6"/>
<circle cx="1440.6" cy="946.7" r="5.5" fill="#2e8b3a" stroke="#3d98d0" stroke-width="2.6"/>
<circle cx="1440.6" cy="964.5" r="5.5" fill="#2e8b3a" stroke="#3d98d0" stroke-width="2.6"/>
<circle cx="1476.2" cy="964.5" r="5.5" fill="#e83f5e" stroke="#e39d41" stroke-width="2.6"/>
<circle cx="1476.2" cy="1000.1" r="5.5" fill="#e37a8b" stroke="#e39d41" stroke-width="2.6"/>
<circle cx="1440.6" cy="1000.1" r="5.5" fill="#2e8b3a" stroke="#e39d41" stroke-width="2.6"/>
<circle cx="1422.8" cy="1000.1" r="5.5" fill="#2e8b3a" stroke="#e39d41" stroke-width="2.6"/>
<circle cx="1422.8" cy="1035.6" r="5.5" fill="#2e8b3a" stroke="#e39d41" stroke-width="2.6"/>
<circle cx="1369.5" cy="1017.8" r="5.5" fill="#2e8b3a" stroke="#e39d41" stroke-width="2.6"/>
<circle cx="1405.0" cy="1053.4" r="5.5" fill="#2e8b3a" stroke="#3d98d0" stroke-width="2.6"/>
<circle cx="1405.0" cy="1071.2" r="5.5" fill="#2e8b3a" stroke="#3d98d0" stroke-width="2.6"/>
<circle cx="1316.2" cy="1071.2" r="5.5" fill="#2e8b3a" stroke="#3d98d0" stroke-width="2.6"/>
<circle cx="1440.6" cy="1071.2" r="5.5" fill="#2e8b3a" stroke="#e39d41" stroke-width="2.6"/>
<use href="#col" transform="translate(1137.8 0)"/>
<use href="#cst" x="1298.4" y="1070.8"/>
<use href="#ult2" transform="translate(1102.2 106.7)"/>
<use href="#colTop" transform="translate(1137.8 0)"/>
<use href="#ultT" transform="translate(1102.2 106.7)"/>
<use href="#bdg" x="1434.1" y="1046.9"/>
<use href="#bdg" x="1310.8" y="1053.8"/>
<text x="1296.0" y="933.6" font-family="Liberation Serif" font-size="16" text-anchor="middle" fill="#fff" stroke="#fff" stroke-width=".4">3</text>
<text x="1296.4" y="1076.3" font-family="Liberation Serif" font-size="16" text-anchor="middle" fill="#fff" stroke="#fff" stroke-width=".4">32</text>
<circle cx="1618.4" cy="662.3" r="5.45" fill="#33465e" stroke="#3d98d0" stroke-width="3.4"/>
<circle cx="1636.2" cy="786.7" r="5.45" fill="#33465e" stroke="#3d98d0" stroke-width="3.4"/>
<circle cx="1618.4" cy="893.4" r="5.45" fill="#33465e" stroke="#3d98d0" stroke-width="3.4"/>
<circle cx="1636.2" cy="911.2" r="5.45" fill="#33465e" stroke="#3d98d0" stroke-width="3.4"/>
<circle cx="1618.4" cy="946.7" r="5.45" fill="#33465e" stroke="#3d98d0" stroke-width="3.4"/>
<circle cx="1636.2" cy="1053.4" r="5.45" fill="#33465e" stroke="#3d98d0" stroke-width="3.4"/>
<circle cx="1671.7" cy="875.6" r="5.45" fill="#33465e" stroke="#3d98d0" stroke-width="3.4"/>
<circle cx="1760.6" cy="875.6" r="5.45" fill="#33465e" stroke="#3d98d0" stroke-width="3.4"/>
<circle cx="1653.9" cy="448.9" r="5.45" fill="#33465e" stroke="#e39d41" stroke-width="3.4"/>
<circle cx="1653.9" cy="591.2" r="5.45" fill="#33465e" stroke="#e39d41" stroke-width="3.4"/>
<circle cx="1653.9" cy="644.5" r="5.45" fill="#33465e" stroke="#e39d41" stroke-width="3.4"/>
<circle cx="1725.0" cy="1035.6" r="5.45" fill="#33465e" stroke="#e39d41" stroke-width="3.4"/>
<circle cx="1671.7" cy="644.5" r="5.5" fill="#e37a8b" stroke="#e39d41" stroke-width="2.6"/>
<circle cx="1671.7" cy="662.3" r="5.5" fill="#2e8b3a" stroke="#3d98d0" stroke-width="2.6"/>
<circle cx="1671.7" cy="680.1" r="5.5" fill="#2e8b3a" stroke="#3d98d0" stroke-width="2.6"/>
<circle cx="1707.3" cy="662.3" r="5.5" fill="#2e8b3a" stroke="#3d98d0" stroke-width="2.6"/>
<circle cx="1725.0" cy="893.4" r="5.5" fill="#2e8b3a" stroke="#3d98d0" stroke-width="2.6"/>
<circle cx="1760.6" cy="893.4" r="5.5" fill="#2e8b3a" stroke="#3d98d0" stroke-width="2.6"/>
<circle cx="1671.7" cy="911.2" r="5.5" fill="#2e8b3a" stroke="#3d98d0" stroke-width="2.6"/>
<circle cx="1707.3" cy="911.2" r="5.5" fill="#2e8b3a" stroke="#3d98d0" stroke-width="2.6"/>
<circle cx="1725.0" cy="911.2" r="5.5" fill="#2e8b3a" stroke="#3d98d0" stroke-width="2.6"/>
<circle cx="1600.6" cy="928.9" r="5.5" fill="#2e8b3a" stroke="#3d98d0" stroke-width="2.6"/>
<circle cx="1671.7" cy="928.9" r="5.5" fill="#2e8b3a" stroke="#3d98d0" stroke-width="2.6"/>
<circle cx="1725.0" cy="946.7" r="5.5" fill="#2e8b3a" stroke="#3d98d0" stroke-width="2.6"/>
<circle cx="1725.0" cy="964.5" r="5.5" fill="#2e8b3a" stroke="#3d98d0" stroke-width="2.6"/>
<circle cx="1760.6" cy="964.5" r="5.5" fill="#2e8b3a" stroke="#e39d41" stroke-width="2.6"/>
<circle cx="1760.6" cy="1000.1" r="5.5" fill="#2e8b3a" stroke="#e39d41" stroke-width="2.6"/>
<circle cx="1725.0" cy="1000.1" r="5.5" fill="#e83f5e" stroke="#e39d41" stroke-width="2.6"/>
<circle cx="1707.3" cy="1000.1" r="5.5" fill="#e37a8b" stroke="#e39d41" stroke-width="2.6"/>
<circle cx="1707.3" cy="1035.6" r="5.5" fill="#2e8b3a" stroke="#e39d41" stroke-width="2.6"/>
<circle cx="1653.9" cy="1017.8" r="5.5" fill="#e83f5e" stroke="#e39d41" stroke-width="2.6"/>
<circle cx="1689.5" cy="1053.4" r="5.5" fill="#2e8b3a" stroke="#3d98d0" stroke-width="2.6"/>
<circle cx="1689.5" cy="1071.2" r="5.5" fill="#2e8b3a" stroke="#3d98d0" stroke-width="2.6"/>
<circle cx="1600.6" cy="1071.2" r="5.5" fill="#2e8b3a" stroke="#3d98d0" stroke-width="2.6"/>
<circle cx="1725.0" cy="1071.2" r="5.5" fill="#2e8b3a" stroke="#e39d41" stroke-width="2.6"/>
<use href="#col" transform="translate(1422.2 0)"/>
<use href="#cst" x="1582.8" y="1070.8"/>
<use href="#ult2" transform="translate(1386.7 106.7)"/>
<use href="#colTop" transform="translate(1422.2 0)"/>
<use href="#ultT" transform="translate(1386.7 106.7)"/>
<use href="#bdg" x="1718.5" y="1046.9"/>
<use href="#bdg" x="1595.2" y="1053.8"/>
<text x="1580.4" y="933.6" font-family="Liberation Serif" font-size="16" text-anchor="middle" fill="#fff" stroke="#fff" stroke-width=".4">2</text>
<text x="1580.8" y="1076.3" font-family="Liberation Serif" font-size="16" text-anchor="middle" fill="#fff" stroke="#fff" stroke-width=".4">64</text>
<circle cx="1902.8" cy="662.3" r="5.45" fill="#33465e" stroke="#3d98d0" stroke-width="3.4"/>
<circle cx="1920.6" cy="786.7" r="5.45" fill="#33465e" stroke="#3d98d0" stroke-width="3.4"/>
<circle cx="1902.8" cy="893.4" r="5.45" fill="#33465e" stroke="#3d98d0" stroke-width="3.4"/>
<circle cx="1920.6" cy="911.2" r="5.45" fill="#33465e" stroke="#3d98d0" stroke-width="3.4"/>
<circle cx="1902.8" cy="946.7" r="5.45" fill="#33465e" stroke="#3d98d0" stroke-width="3.4"/>
<circle cx="1920.6" cy="1053.4" r="5.45" fill="#33465e" stroke="#3d98d0" stroke-width="3.4"/>
<circle cx="1956.2" cy="875.6" r="5.45" fill="#33465e" stroke="#3d98d0" stroke-width="3.4"/>
<circle cx="2045.0" cy="875.6" r="5.45" fill="#33465e" stroke="#3d98d0" stroke-width="3.4"/>
<circle cx="1938.4" cy="431.2" r="5.45" fill="#33465e" stroke="#e39d41" stroke-width="3.4"/>
<circle cx="1938.4" cy="591.2" r="5.45" fill="#33465e" stroke="#e39d41" stroke-width="3.4"/>
<circle cx="1938.4" cy="644.5" r="5.45" fill="#33465e" stroke="#e39d41" stroke-width="3.4"/>
<circle cx="2009.5" cy="1035.6" r="5.45" fill="#33465e" stroke="#e39d41" stroke-width="3.4"/>
<circle cx="1956.2" cy="644.5" r="5.5" fill="#e37a8b" stroke="#e39d41" stroke-width="2.6"/>
<circle cx="1956.2" cy="662.3" r="5.5" fill="#2e8b3a" stroke="#3d98d0" stroke-width="2.6"/>
<circle cx="1956.2" cy="680.1" r="5.5" fill="#2e8b3a" stroke="#3d98d0" stroke-width="2.6"/>
<circle cx="1991.7" cy="662.3" r="5.5" fill="#2e8b3a" stroke="#3d98d0" stroke-width="2.6"/>
<circle cx="2009.5" cy="893.4" r="5.5" fill="#2e8b3a" stroke="#3d98d0" stroke-width="2.6"/>
<circle cx="2045.0" cy="893.4" r="5.5" fill="#2e8b3a" stroke="#3d98d0" stroke-width="2.6"/>
<circle cx="1956.2" cy="911.2" r="5.5" fill="#2e8b3a" stroke="#3d98d0" stroke-width="2.6"/>
<circle cx="1991.7" cy="911.2" r="5.5" fill="#2e8b3a" stroke="#3d98d0" stroke-width="2.6"/>
<circle cx="2009.5" cy="911.2" r="5.5" fill="#2e8b3a" stroke="#3d98d0" stroke-width="2.6"/>
<circle cx="1885.0" cy="928.9" r="5.5" fill="#2e8b3a" stroke="#3d98d0" stroke-width="2.6"/>
<circle cx="1956.2" cy="928.9" r="5.5" fill="#2e8b3a" stroke="#3d98d0" stroke-width="2.6"/>
<circle cx="2009.5" cy="946.7" r="5.5" fill="#2e8b3a" stroke="#3d98d0" stroke-width="2.6"/>
<circle cx="2009.5" cy="964.5" r="5.5" fill="#2e8b3a" stroke="#3d98d0" stroke-width="2.6"/>
<circle cx="2045.0" cy="964.5" r="5.5" fill="#2e8b3a" stroke="#e39d41" stroke-width="2.6"/>
<circle cx="2045.0" cy="1000.1" r="5.5" fill="#2e8b3a" stroke="#e39d41" stroke-width="2.6"/>
<circle cx="2009.5" cy="1000.1" r="5.5" fill="#e83f5e" stroke="#e39d41" stroke-width="2.6"/>
<circle cx="1991.7" cy="1000.1" r="5.5" fill="#e37a8b" stroke="#e39d41" stroke-width="2.6"/>
<circle cx="1991.7" cy="1035.6" r="5.5" fill="#2e8b3a" stroke="#e39d41" stroke-width="2.6"/>
<circle cx="1938.4" cy="1017.8" r="5.5" fill="#e83f5e" stroke="#e39d41" stroke-width="2.6"/>
<circle cx="1973.9" cy="1053.4" r="5.5" fill="#2e8b3a" stroke="#3d98d0" stroke-width="2.6"/>
<circle cx="1973.9" cy="1071.2" r="5.5" fill="#2e8b3a" stroke="#3d98d0" stroke-width="2.6"/>
<circle cx="1885.0" cy="1071.2" r="5.5" fill="#2e8b3a" stroke="#3d98d0" stroke-width="2.6"/>
<circle cx="2009.5" cy="1071.2" r="5.5" fill="#2e8b3a" stroke="#e39d41" stroke-width="2.6"/>
<use href="#col" transform="translate(1706.7 0)"/>
<use href="#cst" x="1867.3" y="1070.8"/>
<use href="#ult2" transform="translate(1671.1 106.7)"/>
<use href="#colTop" transform="translate(1706.7 0)"/>
<use href="#ultT" transform="translate(1671.1 106.7)"/>
<use href="#bdg" x="2003.0" y="1046.9"/>
<use href="#bdg" x="1879.7" y="1053.8"/>
<text x="1864.9" y="933.6" font-family="Liberation Mono" font-size="16" text-anchor="middle" fill="#fff" stroke="#fff" stroke-width=".4">1</text>
<text x="1863.8" y="1076.0" font-family="Liberation Mono" font-size="15" text-anchor="middle" fill="#fff" stroke="#fff" stroke-width=".4">128</text>
<circle cx="2187.3" cy="662.3" r="5.45" fill="#33465e" stroke="#3d98d0" stroke-width="3.4"/>
<circle cx="2205.0" cy="786.7" r="5.45" fill="#33465e" stroke="#3d98d0" stroke-width="3.4"/>
<circle cx="2187.3" cy="893.4" r="5.45" fill="#33465e" stroke="#3d98d0" stroke-width="3.4"/>
<circle cx="2205.0" cy="911.2" r="5.45" fill="#33465e" stroke="#3d98d0" stroke-width="3.4"/>
<circle cx="2187.3" cy="946.7" r="5.45" fill="#33465e" stroke="#3d98d0" stroke-width="3.4"/>
<circle cx="2205.0" cy="1053.4" r="5.45" fill="#33465e" stroke="#3d98d0" stroke-width="3.4"/>
<circle cx="2240.6" cy="875.6" r="5.45" fill="#33465e" stroke="#3d98d0" stroke-width="3.4"/>
<circle cx="2329.5" cy="875.6" r="5.45" fill="#33465e" stroke="#3d98d0" stroke-width="3.4"/>
<circle cx="2222.8" cy="413.4" r="5.45" fill="#33465e" stroke="#e39d41" stroke-width="3.4"/>
<circle cx="2222.8" cy="591.2" r="5.45" fill="#33465e" stroke="#e39d41" stroke-width="3.4"/>
<circle cx="2222.8" cy="644.5" r="5.45" fill="#33465e" stroke="#e39d41" stroke-width="3.4"/>
<circle cx="2293.9" cy="1035.6" r="5.45" fill="#33465e" stroke="#e39d41" stroke-width="3.4"/>
<circle cx="2240.6" cy="644.5" r="5.5" fill="#2e8b3a" stroke="#e39d41" stroke-width="2.6"/>
<circle cx="2240.6" cy="662.3" r="5.5" fill="#2e8b3a" stroke="#3d98d0" stroke-width="2.6"/>
<circle cx="2240.6" cy="680.1" r="5.5" fill="#e37a8b" stroke="#3d98d0" stroke-width="2.6"/>
<circle cx="2276.2" cy="662.3" r="5.5" fill="#e83f5e" stroke="#3d98d0" stroke-width="2.6"/>
<circle cx="2293.9" cy="893.4" r="5.5" fill="#2e8b3a" stroke="#3d98d0" stroke-width="2.6"/>
<circle cx="2329.5" cy="893.4" r="5.5" fill="#e83f5e" stroke="#3d98d0" stroke-width="2.6"/>
<circle cx="2240.6" cy="911.2" r="5.5" fill="#2e8b3a" stroke="#3d98d0" stroke-width="2.6"/>
<circle cx="2276.2" cy="911.2" r="5.5" fill="#2e8b3a" stroke="#3d98d0" stroke-width="2.6"/>
<circle cx="2293.9" cy="911.2" r="5.5" fill="#2e8b3a" stroke="#3d98d0" stroke-width="2.6"/>
<circle cx="2169.5" cy="928.9" r="5.5" fill="#e83f5e" stroke="#3d98d0" stroke-width="2.6"/>
<circle cx="2240.6" cy="928.9" r="5.5" fill="#e37a8b" stroke="#3d98d0" stroke-width="2.6"/>
<circle cx="2293.9" cy="946.7" r="5.5" fill="#2e8b3a" stroke="#3d98d0" stroke-width="2.6"/>
<circle cx="2293.9" cy="964.5" r="5.5" fill="#2e8b3a" stroke="#3d98d0" stroke-width="2.6"/>
<circle cx="2329.5" cy="964.5" r="5.5" fill="#e83f5e" stroke="#e39d41" stroke-width="2.6"/>
<circle cx="2329.5" cy="1000.1" r="5.5" fill="#e37a8b" stroke="#e39d41" stroke-width="2.6"/>
<circle cx="2293.9" cy="1000.1" r="5.5" fill="#2e8b3a" stroke="#e39d41" stroke-width="2.6"/>
<circle cx="2276.2" cy="1000.1" r="5.5" fill="#2e8b3a" stroke="#e39d41" stroke-width="2.6"/>
<circle cx="2276.2" cy="1035.6" r="5.5" fill="#2e8b3a" stroke="#e39d41" stroke-width="2.6"/>
<circle cx="2222.8" cy="1017.8" r="5.5" fill="#2e8b3a" stroke="#e39d41" stroke-width="2.6"/>
<circle cx="2258.4" cy="1053.4" r="5.45" fill="#33465e" stroke="#3d98d0" stroke-width="3.4"/>
<circle cx="2276.2" cy="1071.2" r="5.45" fill="#33465e" stroke="#e39d41" stroke-width="3.4"/>
<circle cx="2293.9" cy="1071.2" r="5.45" fill="#33465e" stroke="#e39d41" stroke-width="3.4"/>
<circle cx="2187.3" cy="1071.2" r="5.5" fill="#2e8b3a" stroke="#e39d41" stroke-width="2.6"/>
<use href="#col" transform="translate(1991.1 0)"/>
<use href="#cst" x="2169.5" y="1070.8"/>
<use href="#colTop" transform="translate(1991.1 0)"/>
<text x="2149.3" y="933.6" font-family="Liberation Mono" font-size="16" text-anchor="middle" fill="#fff" stroke="#fff" stroke-width=".4">0</text>
<text x="2167.5" y="1076.8" font-family="Liberation Sans" font-size="16.6" text-anchor="middle" fill="#fff" textLength="18" lengthAdjust="spacingAndGlyphs">ON</text>
<path d="M113.5 662.3 L123.8 649.0 A22.6 22.6 0 1 0 123.8 675.6 Z" fill="#ff4a66" filter="url(#rglow)" opacity=".75"/>
<path d="M113.5 662.3 L123.8 649.0 A22.6 22.6 0 1 0 123.8 675.6 Z" fill="#d45a6b" stroke="#c94a5c" stroke-width="1"/>
<path d="M113.5 786.7 L123.8 773.4 A22.6 22.6 0 1 0 123.8 800.0 Z" fill="#ff4a66" filter="url(#rglow)" opacity=".75"/>
<path d="M113.5 786.7 L123.8 773.4 A22.6 22.6 0 1 0 123.8 800.0 Z" fill="#d45a6b" stroke="#c94a5c" stroke-width="1"/>
<path d="M2427.6 466.7 L2417.3 453.4 A22.6 22.6 0 1 1 2417.3 480.0 Z" fill="#ff4a66" filter="url(#rglow)" opacity=".75"/>
<path d="M2427.6 466.7 L2417.3 453.4 A22.6 22.6 0 1 1 2417.3 480.0 Z" fill="#d45a6b" stroke="#c94a5c" stroke-width="1"/>
<path d="M2427.6 662.3 L2417.3 649.0 A22.6 22.6 0 1 1 2417.3 675.6 Z" fill="#ff4a66" filter="url(#rglow)" opacity=".75"/>
<path d="M2427.6 662.3 L2417.3 649.0 A22.6 22.6 0 1 1 2417.3 675.6 Z" fill="#d45a6b" stroke="#c94a5c" stroke-width="1"/>
<text x="101.5" y="669.0" font-family="Liberation Mono" font-size="19" text-anchor="middle" fill="#fff" >175</text>
<text x="101.5" y="793.5" font-family="Liberation Mono" font-size="19" text-anchor="middle" fill="#fff" >7</text>
<text x="2438.5" y="473.5" font-family="Liberation Mono" font-size="19" text-anchor="middle" fill="#fff" >25</text>
<text x="2437.5" y="669.0" font-family="Liberation Mono" font-size="19" text-anchor="middle" fill="#fff" >0</text>
<circle cx="125.0" cy="662.3" r="5.5" fill="#2e8b3a" stroke="#3d98d0" stroke-width="2.6"/>
<circle cx="125.0" cy="786.7" r="5.5" fill="#2e8b3a" stroke="#3d98d0" stroke-width="2.6"/>
<circle cx="2418.4" cy="466.7" r="5.5" fill="#2e8b3a" stroke="#3d98d0" stroke-width="2.6"/>
<circle cx="2418.4" cy="662.3" r="5.5" fill="#e37a8b" stroke="#3d98d0" stroke-width="2.6"/>
<circle cx="2365.0" cy="662.3" r="5.45" fill="#33465e" stroke="#3d98d0" stroke-width="3.4"/>
<circle cx="2240.6" cy="413.4" r="5.5" fill="#2e8b3a" stroke="#e39d41" stroke-width="2.6"/>
<circle cx="2240.6" cy="431.2" r="5.5" fill="#e37a8b" stroke="#e39d41" stroke-width="2.6"/>
<circle cx="2240.6" cy="448.9" r="5.5" fill="#e37a8b" stroke="#e39d41" stroke-width="2.6"/>
<circle cx="2240.6" cy="466.7" r="5.5" fill="#2e8b3a" stroke="#e39d41" stroke-width="2.6"/>
<circle cx="2240.6" cy="484.5" r="5.5" fill="#2e8b3a" stroke="#e39d41" stroke-width="2.6"/>
<circle cx="2240.6" cy="502.3" r="5.5" fill="#e37a8b" stroke="#e39d41" stroke-width="2.6"/>
<circle cx="2240.6" cy="520.1" r="5.5" fill="#e37a8b" stroke="#e39d41" stroke-width="2.6"/>
<circle cx="2240.6" cy="537.8" r="5.5" fill="#e37a8b" stroke="#e39d41" stroke-width="2.6"/>
<circle cx="2222.8" cy="413.4" r="5.45" fill="#33465e" stroke="#e39d41" stroke-width="3.4"/>
<circle cx="2276.2" cy="466.7" r="5.5" fill="#2e8b3a" stroke="#3d98d0" stroke-width="2.6"/>
<circle cx="2311.7" cy="484.5" r="5.5" fill="#e83f5e" stroke="#3d98d0" stroke-width="2.6"/>
<circle cx="2347.3" cy="484.5" r="5.5" fill="#e37a8b" stroke="#3d98d0" stroke-width="2.6"/>
<circle cx="2347.3" cy="466.7" r="5.5" fill="#2e8b3a" stroke="#3d98d0" stroke-width="2.6"/>
<circle cx="2329.5" cy="448.9" r="5.45" fill="#33465e" stroke="#e39d41" stroke-width="3.4"/>
<circle cx="2347.3" cy="448.9" r="5.5" fill="#e37a8b" stroke="#e39d41" stroke-width="2.6"/>
<circle cx="2382.8" cy="466.7" r="5.5" fill="#2e8b3a" stroke="#3d98d0" stroke-width="2.6"/>
<circle cx="2382.8" cy="448.9" r="5.45" fill="#33465e" stroke="#3d98d0" stroke-width="3.4"/>
<circle cx="2329.5" cy="733.4" r="5.45" fill="#33465e" stroke="#e39d41" stroke-width="3.4"/>
<circle cx="2347.3" cy="733.4" r="5.45" fill="#33465e" stroke="#e39d41" stroke-width="3.4"/>
<circle cx="2365.0" cy="786.7" r="5.5" fill="#2e8b3a" stroke="#3d98d0" stroke-width="2.6"/>
<circle cx="2365.0" cy="804.5" r="5.5" fill="#e37a8b" stroke="#3d98d0" stroke-width="2.6"/>
<circle cx="2400.6" cy="804.5" r="5.5" fill="#e83f5e" stroke="#e39d41" stroke-width="2.6"/>
<circle cx="2329.5" cy="804.5" r="5.5" fill="#e83f5e" stroke="#3d98d0" stroke-width="2.6"/>
<path d="M2245.6 403.2 L2275.6 407.3 L2276 452 L2270.3 459 L2270.3 474 L2276 481 L2275.6 546.3 L2245.6 550.4 Z" fill="#1f3fae" stroke="#1f3fae" stroke-width="3" filter="url(#glow)" opacity=".8"/>
<path d="M2245.6 403.2 L2275.6 407.3 L2276 452 L2270.3 459 L2270.3 474 L2276 481 L2275.6 546.3 L2245.6 550.4 Z" fill="#0b4b99" stroke="#1a48b4" stroke-width="1"/>
<text x="2247.3" y="419.4" font-family="Liberation Serif" font-size="14.2" fill="#d5e3f7" textLength="6.3" lengthAdjust="spacingAndGlyphs">1</text>
<text x="2247.3" y="437.2" font-family="Liberation Serif" font-size="14.2" fill="#d5e3f7" textLength="6.3" lengthAdjust="spacingAndGlyphs">2</text>
<text x="2247.3" y="454.9" font-family="Liberation Serif" font-size="14.2" fill="#d5e3f7" textLength="6.3" lengthAdjust="spacingAndGlyphs">4</text>
<text x="2247.3" y="472.7" font-family="Liberation Serif" font-size="14.2" fill="#d5e3f7" textLength="6.3" lengthAdjust="spacingAndGlyphs">8</text>
<text x="2247.3" y="490.5" font-family="Liberation Serif" font-size="14.2" fill="#d5e3f7" textLength="12.6" lengthAdjust="spacingAndGlyphs">16</text>
<text x="2247.3" y="508.3" font-family="Liberation Serif" font-size="14.2" fill="#d5e3f7" textLength="12.6" lengthAdjust="spacingAndGlyphs">32</text>
<text x="2247.3" y="526.1" font-family="Liberation Serif" font-size="14.2" fill="#d5e3f7" textLength="12.6" lengthAdjust="spacingAndGlyphs">64</text>
<text x="2247.3" y="543.8" font-family="Liberation Serif" font-size="14.2" fill="#d5e3f7" textLength="18.9" lengthAdjust="spacingAndGlyphs">128</text>
<path d="M2256.9 460.6 L2264.8 466.6 L2256.9 472.6 Z" fill="#fff"/>
<use href="#cst" x="2293.9" y="484.1"/>
<use href="#cst" x="2311.7" y="804.1"/>
<text x="2291.5" y="489.8" font-family="Liberation Mono" font-size="16" text-anchor="middle" fill="#fff" >0</text>
<text x="2309.5" y="809.8" font-family="Liberation Mono" font-size="16" text-anchor="middle" fill="#fff" >0</text>
<use href="#bdg" x="2306.0" y="467.0"/>
<use href="#bdg" x="2324.0" y="787.0"/>
<g transform="translate(2097.8 -195.6)"><g filter="url(#glow)" fill="#1f3fae" stroke="#1f3fae" stroke-width="3.5" opacity=".85"><path d="M255.9 640 L278.5 653.6 L278.5 668 L255.9 679 Z"/></g><path d="M255.9 640 L278.5 653.6 L278.5 668 L255.9 679 Z" fill="#1f5c9a" stroke="#1f3fae"/><path d="M278.5 653.6 L269 661.4 L278.5 668 Z" fill="#233f9c"/><text transform="translate(258.9 660.6) rotate(90)" text-anchor="middle" font-family="Liberation Mono" font-weight="bold" font-size="12.6" fill="#eaf2ff">MUX</text><use href="#bdg" x="276.7" y="644.2"/></g>
<use href="#ult2" transform="translate(2062.2 -160.0)"/>
<path d="M2376.5 787.6 h13.5 M2376.5 793.4 h13.5" stroke="#fff" stroke-width="2.6" fill="none"/>
<use href="#bdg" x="2399.7" y="774.7"/>
</svg>
</div>
<div id="top"></div>
<svg width="420" height="48" viewBox="0 0 420 48" style="left:0;top:0">
<g fill="#dcdcdc">
<rect x="24" y="16.0" width="21.6" height="3.7" rx="1.2"/>
<rect x="24" y="23.4" width="21.6" height="3.7" rx="1.2"/>
<rect x="24" y="30.6" width="21.6" height="3.7" rx="1.2"/>
<path d="M80 14.2 c6.8 0 12.2 4 12.2 9 s-5.4 9 -12.2 9 c-1.6 0 -3.2 -.2 -4.6 -.7 c-1.6 1.4 -3.6 2.6 -5.6 3.2 c.9 -1.3 1.6 -3 1.7 -4.6 c-2.2 -1.7 -3.7 -4.1 -3.7 -6.9 c0 -5 5.4 -9 12.2 -9z"/>
<path d="M114 14 a1.6 1.6 0 0 1 1.6 -1.6 h12.6 l8.2 8.2 v15.8 a1.6 1.6 0 0 1 -1.6 1.6 h-19.2 a1.6 1.6 0 0 1 -1.6 -1.6z"/>
<path d="M128.6 12.2 v7.2 a1 1 0 0 0 1 1 h7z" fill="#2d2a3b"/>
<path d="M129.4 13.4 l6.2 6.2 h-5.2 a1 1 0 0 1 -1 -1z"/>
<path d="M162.6 12.4 h15.4 a1.2 1.2 0 0 1 1.2 1.2 v19.2 h-16.2 a3 3 0 0 1 -3 -3 v-14.6 a2.8 2.8 0 0 1 2.6 -2.8z"/>
<path d="M180.4 15.6 v20.8 h-17.2 a3.2 3.2 0 0 1 -3.2 -3.2" fill="none" stroke="#dcdcdc" stroke-width="1.1"/>
<path d="M163.4 34.6 h16" fill="none" stroke="#dcdcdc" stroke-width="1"/>
<rect x="210.8" y="14.6" width="7.2" height="6.4" rx="1"/><rect x="202" y="29" width="7" height="6.6" rx="1"/><rect x="210.9" y="29" width="7" height="6.6" rx="1"/><rect x="219.8" y="29" width="7" height="6.6" rx="1"/>
<path d="M214.4 21 v8 M205.5 29 v-3.6 h17.8 v3.6" fill="none" stroke="#dcdcdc" stroke-width="1.7"/>
<path d="M254 13.2 h11.4 v1.8 h-1.4 v7.2 l5.6 10 a1.8 1.8 0 0 1 -1.6 2.8 h-16.6 a1.8 1.8 0 0 1 -1.6 -2.8 l5.6 -10 v-7.2 h-1.4z M257.8 15 v7.8 l-2.6 4.6 h9 l-2.6 -4.6 v-7.8z" fill-rule="evenodd"/>
<path d="M296.4 18.2 h16.8 a2 2 0 0 1 1.6 .8 l3.6 5.4 a2 2 0 0 1 .3 1.1 v2.8 a1.6 1.6 0 0 1 -1.6 1.6 h-24.6 a1.6 1.6 0 0 1 -1.6 -1.6 v-2.8 a2 2 0 0 1 .3 -1.1 l3.6 -5.4 a2 2 0 0 1 1.6 -.8z M297.4 20.2 l-2.8 4.2 h4.6 l1 2 h9.2 l1 -2 h4.6 l-2.8 -4.2z" fill-rule="evenodd"/>
</g>
<text x="329.4" y="32" font-family="Liberation Sans" font-size="18.4" fill="#dcdcdc" stroke="#dcdcdc" stroke-width="0.5" textLength="43" lengthAdjust="spacingAndGlyphs">+255</text>
</svg>
<div style="position:absolute;left:0;top:12.2px;width:2556px;text-align:center;font:24.9px 'Liberation Mono',monospace;color:#84de4a;-webkit-text-stroke:0.75px #84de4a;letter-spacing:0">COMPONENT FACTORY</div>
<div style="position:absolute;right:54px;top:7.2px;font:14.5px 'Liberation Mono',monospace;white-space:pre;line-height:17px;color:#e2e2e2">GATE SCORE:</div>
<div style="position:absolute;right:54px;top:28.3px;font:14.5px 'Liberation Mono',monospace;white-space:pre;line-height:17px;color:#e2e2e2">DELAY SCORE:</div>
<div style="position:absolute;right:12.4px;top:6.6px;font:14.5px 'Liberation Mono',monospace;white-space:pre;line-height:17px;color:#f0a743;font-weight:bold">2732</div>
<div style="position:absolute;right:12.4px;top:27.7px;font:14.5px 'Liberation Mono',monospace;white-space:pre;line-height:17px;color:#f0a743;font-weight:bold">232</div>
<svg width="14" height="18" viewBox="0 0 14 18" style="left:2383px;top:26px"><path d="M1.6 1 h10.6 v2 h-1 c0 3 -1.6 4.6 -2.8 6 c1.2 1.4 2.8 3 2.8 6 h1 v2 h-10.6 v-2 h1 c0 -3 1.6 -4.6 2.8 -6 c-1.200 -1.4 -2.8 -3 -2.8 -6 h-1z M4.200 3 c0 2.400 1.400 3.600 2.700 5 c1.300 -1.400 2.700 -2.600 2.700 -5z" fill="#dcdcdc" fill-rule="evenodd"/></svg>
<div class="btn" style="left:8px;top:59px;width:170px;height:27px;border-radius:7px"></div>
<div style="position:absolute;left:14.5px;top:63.2px;font:16.4px 'Liberation Serif',serif;color:#f2f2f2">Tick</div>
<div style="position:absolute;left:162px;top:72.4px;width:8px;height:1.6px;background:#f2f2f2"></div>
<div class="btn" style="left:184px;top:59px;width:38.6px;height:21.6px;border-radius:7px"></div>
<div class="btn" style="left:233px;top:59px;width:38.6px;height:21.6px;border-radius:7px"></div>
<div class="btn" style="left:185.2px;top:89.3px;width:39.4px;height:39.4px"></div>
<div class="btn" style="left:233.2px;top:89.3px;width:39.4px;height:39.4px"></div>
<div class="btn" style="left:183.5px;top:137.2px;width:39.4px;height:39.4px"></div>
<div class="btn" style="left:185.2px;top:188.2px;width:39.4px;height:39.4px"></div>
<div class="btn" style="left:233.2px;top:188.2px;width:39.4px;height:39.4px"></div>
<div class="btn" style="left:185.2px;top:235.6px;width:39.4px;height:39.4px"></div>
<div class="btn" style="left:233.2px;top:235.6px;width:39.4px;height:39.4px"></div>
<svg width="300" height="290" viewBox="0 0 300 290" style="left:0;top:0">
<circle cx="201.6" cy="68.2" r="4.7" fill="none" stroke="#dcdcdc" stroke-width="1.8"/>
<path d="M205.3 71.9 l3.5 3.5" stroke="#dcdcdc" stroke-width="2.3" stroke-linecap="round"/>
<path d="M199.0 68.2 h5.2" stroke="#dcdcdc" stroke-width="1.6"/>
<path d="M201.6 65.6 v5.2" stroke="#dcdcdc" stroke-width="1.6"/>
<circle cx="250.6" cy="68.2" r="4.7" fill="none" stroke="#dcdcdc" stroke-width="1.8"/>
<path d="M254.3 71.9 l3.5 3.5" stroke="#dcdcdc" stroke-width="2.3" stroke-linecap="round"/>
<path d="M248.0 68.2 h5.2" stroke="#dcdcdc" stroke-width="1.6"/>
<path d="M199.8 102.6 l6.600 6.000 l-6.600 6.000" fill="none" stroke="#dcdcdc" stroke-width="3.6" stroke-linecap="round" stroke-linejoin="round"/>
<path d="M248 101.6 v14.4 a.8 .8 0 0 0 1.200 .6 l9 -7.2 a.8 .8 0 0 0 0 -1.200 l-9 -7.200 a.8 .8 0 0 0 -1.200 .600z" fill="#dcdcdc"/>
<rect x="196.200" y="150.400" width="13" height="13" rx="2" fill="#575366"/>
<rect x="195.00" y="198" width="3" height="3" fill="#dcdcdc"/><rect x="195.00" y="215" width="3" height="3" fill="#dcdcdc"/>
<rect x="199.25" y="198" width="3" height="3" fill="#dcdcdc"/><rect x="199.25" y="215" width="3" height="3" fill="#dcdcdc"/>
<rect x="195" y="202.25" width="3" height="3" fill="#dcdcdc"/><rect x="212" y="202.25" width="3" height="3" fill="#dcdcdc"/>
<rect x="203.50" y="198" width="3" height="3" fill="#dcdcdc"/><rect x="203.50" y="215" width="3" height="3" fill="#dcdcdc"/>
<rect x="195" y="206.50" width="3" height="3" fill="#dcdcdc"/><rect x="212" y="206.50" width="3" height="3" fill="#dcdcdc"/>
<rect x="207.75" y="198" width="3" height="3" fill="#dcdcdc"/><rect x="207.75" y="215" width="3" height="3" fill="#dcdcdc"/>
<rect x="195" y="210.75" width="3" height="3" fill="#dcdcdc"/><rect x="212" y="210.75" width="3" height="3" fill="#dcdcdc"/>
<rect x="212.00" y="198" width="3" height="3" fill="#dcdcdc"/><rect x="212.00" y="215" width="3" height="3" fill="#dcdcdc"/>
<path d="M245 203 h15.800 v2.200 h-15.800z M250 200.200 h5.800 v2.900 h-5.800z M246.300 206.200 h13.200 l-.800 9.800 a1.700 1.700 0 0 1 -1.700 1.500 h-8.200 a1.700 1.700 0 0 1 -1.700 -1.500z" fill="#dcdcdc"/>
<path d="M250.200 208.200 v6.800 M252.900 208.200 v6.800 M255.600 208.200 v6.800" stroke="#343042" stroke-width="1.300"/>
<path d="M251.300 201.500 h3.200" stroke="#343042" stroke-width="1.200"/>
<path d="M195 265.200 l1.900 -6.600 l4.800 4.800z M198.100 257.200 l10.600 -10.600 l4.900 4.900 l-10.600 10.600z M209.800 245.500 l1.300 -1.300 a1.600 1.600 0 0 1 2.300 0 l2.600 2.600 a1.600 1.600 0 0 1 0 2.300 l-1.300 1.300z" fill="#dcdcdc"/>
<circle cx="252.900" cy="255.600" r="8.400" fill="none" stroke="#3d98d0" stroke-width="5.800"/>
<path d="M246 260.400 A8.400 8.400 0 1 1 260.800 252.700" fill="none" stroke="#e39d41" stroke-width="5.800"/>
</svg>
<div class="btn" style="left:9.300px;top:93.300px;width:169.400px;height:311.500px;border-radius:9px">
<div class="pl" style="top:16px;left:-6px">Divident</div>
<div class="pv" style="top:65.400px;left:-7.600px">175</div>
<div class="pl" style="top:91.200px;left:-5.600px">Divizor</div>
<div class="pv" style="top:140.400px;left:-8px">7</div>
<div class="pl" style="top:168.200px;left:-9.400px">Quotent</div>
<div class="pv" style="top:216.400px;left:-8.400px;font-size:15.400px">25</div>
<div class="pl" style="top:243.200px;left:-9.800px">remainder</div>
<div class="pv" style="top:291.600px;left:-8px;font-size:15.400px">0</div>
</div>
<div style="position:absolute;left:59.0px;top:128.0px;width:13.9px;height:13.9px;background:#2d8b3c;box-sizing:border-box;border:2.0px solid #1b7425;border-radius:6.5px 1.5px 6.5px 6.5px"></div><div style="position:absolute;left:73.2px;top:128.0px;width:13.9px;height:13.9px;background:#2d8b3c;box-sizing:border-box;border:2.0px solid #1b7425;border-radius:6.5px 1.5px 6.5px 6.5px"></div><div style="position:absolute;left:87.4px;top:128.0px;width:13.9px;height:13.9px;background:#2d8b3c;box-sizing:border-box;border:2.0px solid #1b7425;border-radius:6.5px 1.5px 6.5px 6.5px"></div><div style="position:absolute;left:101.6px;top:128.0px;width:13.9px;height:13.9px;background:#2d8b3c;box-sizing:border-box;border:2.0px solid #1b7425;border-radius:6.5px 1.5px 6.5px 6.5px"></div><div style="position:absolute;left:59.0px;top:141.7px;width:13.9px;height:13.9px;background:#2d8b3c;box-sizing:border-box;border:2.0px solid #1b7425;border-radius:6.5px 1.5px 6.5px 6.5px"></div><div style="position:absolute;left:73.2px;top:141.7px;width:13.9px;height:13.9px;background:#e83f5e;box-sizing:border-box;border:2.0px solid #bf2843;border-radius:6.5px 6.5px 6.5px 1.5px"></div><div style="position:absolute;left:87.4px;top:141.7px;width:13.9px;height:13.9px;background:#2d8b3c;box-sizing:border-box;border:2.0px solid #1b7425;border-radius:6.5px 1.5px 6.5px 6.5px"></div><div style="position:absolute;left:101.6px;top:141.7px;width:13.9px;height:13.9px;background:#e83f5e;box-sizing:border-box;border:2.0px solid #bf2843;border-radius:6.5px 6.5px 6.5px 1.5px"></div>
<div style="position:absolute;left:59.0px;top:203.0px;width:13.9px;height:13.9px;background:#e83f5e;box-sizing:border-box;border:2.0px solid #bf2843;border-radius:6.5px 6.5px 6.5px 1.5px"></div><div style="position:absolute;left:73.2px;top:203.0px;width:13.9px;height:13.9px;background:#2d8b3c;box-sizing:border-box;border:2.0px solid #1b7425;border-radius:6.5px 1.5px 6.5px 6.5px"></div><div style="position:absolute;left:87.4px;top:203.0px;width:13.9px;height:13.9px;background:#2d8b3c;box-sizing:border-box;border:2.0px solid #1b7425;border-radius:6.5px 1.5px 6.5px 6.5px"></div><div style="position:absolute;left:101.6px;top:203.0px;width:13.9px;height:13.9px;background:#2d8b3c;box-sizing:border-box;border:2.0px solid #1b7425;border-radius:6.5px 1.5px 6.5px 6.5px"></div><div style="position:absolute;left:59.0px;top:216.7px;width:13.9px;height:13.9px;background:#e83f5e;box-sizing:border-box;border:2.0px solid #bf2843;border-radius:6.5px 6.5px 6.5px 1.5px"></div><div style="position:absolute;left:73.2px;top:216.7px;width:13.9px;height:13.9px;background:#e83f5e;box-sizing:border-box;border:2.0px solid #bf2843;border-radius:6.5px 6.5px 6.5px 1.5px"></div><div style="position:absolute;left:87.4px;top:216.7px;width:13.9px;height:13.9px;background:#e83f5e;box-sizing:border-box;border:2.0px solid #bf2843;border-radius:6.5px 6.5px 6.5px 1.5px"></div><div style="position:absolute;left:101.6px;top:216.7px;width:13.9px;height:13.9px;background:#e83f5e;box-sizing:border-box;border:2.0px solid #bf2843;border-radius:6.5px 6.5px 6.5px 1.5px"></div>
<div style="position:absolute;left:55.6px;top:277.8px;width:14.7px;height:14.4px;background:#2d8b3c;box-sizing:border-box;border:0.5px solid #2d8b3c;border-radius:6.9px 1.5px 6.9px 6.9px"></div><div style="position:absolute;left:70.6px;top:277.8px;width:14.7px;height:14.4px;background:#e83f5e;box-sizing:border-box;border:0.5px solid #e83f5e;border-radius:6.9px 6.9px 6.9px 1.5px"></div><div style="position:absolute;left:85.6px;top:277.8px;width:14.7px;height:14.4px;background:#e83f5e;box-sizing:border-box;border:0.5px solid #e83f5e;border-radius:6.9px 6.9px 6.9px 1.5px"></div><div style="position:absolute;left:100.6px;top:277.8px;width:14.7px;height:14.4px;background:#2d8b3c;box-sizing:border-box;border:0.5px solid #2d8b3c;border-radius:6.9px 1.5px 6.9px 6.9px"></div><div style="position:absolute;left:55.6px;top:293.2px;width:14.7px;height:14.4px;background:#e83f5e;box-sizing:border-box;border:0.5px solid #e83f5e;border-radius:6.9px 6.9px 6.9px 1.5px"></div><div style="position:absolute;left:70.6px;top:293.2px;width:14.7px;height:14.4px;background:#e83f5e;box-sizing:border-box;border:0.5px solid #e83f5e;border-radius:6.9px 6.9px 6.9px 1.5px"></div><div style="position:absolute;left:85.6px;top:293.2px;width:14.7px;height:14.4px;background:#e83f5e;box-sizing:border-box;border:0.5px solid #e83f5e;border-radius:6.9px 6.9px 6.9px 1.5px"></div><div style="position:absolute;left:100.6px;top:293.2px;width:14.7px;height:14.4px;background:#2d8b3c;box-sizing:border-box;border:0.5px solid #2d8b3c;border-radius:6.9px 1.5px 6.9px 6.9px"></div>
<div style="position:absolute;left:55.6px;top:353.0px;width:14.7px;height:14.4px;background:#e83f5e;box-sizing:border-box;border:0.5px solid #e83f5e;border-radius:6.9px 6.9px 6.9px 1.5px"></div><div style="position:absolute;left:70.6px;top:353.0px;width:14.7px;height:14.4px;background:#e83f5e;box-sizing:border-box;border:0.5px solid #e83f5e;border-radius:6.9px 6.9px 6.9px 1.5px"></div><div style="position:absolute;left:85.6px;top:353.0px;width:14.7px;height:14.4px;background:#e83f5e;box-sizing:border-box;border:0.5px solid #e83f5e;border-radius:6.9px 6.9px 6.9px 1.5px"></div><div style="position:absolute;left:100.6px;top:353.0px;width:14.7px;height:14.4px;background:#e83f5e;box-sizing:border-box;border:0.5px solid #e83f5e;border-radius:6.9px 6.9px 6.9px 1.5px"></div><div style="position:absolute;left:55.6px;top:368.4px;width:14.7px;height:14.4px;background:#e83f5e;box-sizing:border-box;border:0.5px solid #e83f5e;border-radius:6.9px 6.9px 6.9px 1.5px"></div><div style="position:absolute;left:70.6px;top:368.4px;width:14.7px;height:14.4px;background:#e83f5e;box-sizing:border-box;border:0.5px solid #e83f5e;border-radius:6.9px 6.9px 6.9px 1.5px"></div><div style="position:absolute;left:85.6px;top:368.4px;width:14.7px;height:14.4px;background:#e83f5e;box-sizing:border-box;border:0.5px solid #e83f5e;border-radius:6.9px 6.9px 6.9px 1.5px"></div><div style="position:absolute;left:100.6px;top:368.4px;width:14.7px;height:14.4px;background:#e83f5e;box-sizing:border-box;border:0.5px solid #e83f5e;border-radius:6.9px 6.9px 6.9px 1.5px"></div>
<div class="rb" style="top:57.2px"><span style="display:inline-block;transform:scaleY(1.16)">1BIT</span></div>
<div class="rb" style="top:107.2px"><span style="display:inline-block;transform:scaleY(1.16)">8BIT</span></div>
<div class="rb" style="top:157.2px"><span style="display:inline-block;transform:scaleY(1.16)">16BIT</span></div>
<div class="rb" style="top:207.2px"><span style="display:inline-block;transform:scaleY(1.16)">32BIT</span></div>
<div class="rb" style="top:257.2px"><span style="display:inline-block;transform:scaleY(1.16)">64BIT</span></div>
<div class="rb" style="top:307.2px"><span style="display:inline-block;transform:scaleY(1.16)">IO</span></div>
<div class="rb" style="top:357.2px"><span style="display:inline-block;transform:scaleY(1.16)">CUSTOM</span></div>
<div id="bottom"></div>
<div style="position:absolute;left:5px;top:1214.800px;width:40.400px;height:22.400px;border-radius:6px;background:#4e4a5f"></div>
<svg width="50" height="30" viewBox="0 0 50 30" style="left:0;top:1210px"><path d="M18.700 13 l6.400 6.400 l6.400 -6.400" fill="none" stroke="#ececec" stroke-width="2.700"/></svg>
<div style="position:absolute;left:0;top:1240.700px;width:2556.600px;text-align:center;font:18.300px 'Liberation Mono',monospace;color:#e4e4e4">Component preview</div>
<svg width="260" height="80" viewBox="1160 1310 260 80" style="left:1160px;top:1310px"><g filter="url(#tg)" opacity=".9" fill="#26c6d2"><rect x="1223" y="1351.200" width="113.300" height="13.600"/><rect x="1329.200" y="1323" width="7.100" height="29"/><rect x="1336" y="1344.100" width="7" height="7.100"/><rect x="1230.10" y="1336.700" width="7.300" height="7.400"/><rect x="1244.16" y="1336.700" width="7.300" height="7.400"/><rect x="1258.22" y="1336.700" width="7.300" height="7.400"/><rect x="1272.28" y="1336.700" width="7.300" height="7.400"/><rect x="1286.34" y="1336.700" width="7.300" height="7.400"/><rect x="1300.40" y="1336.700" width="7.300" height="7.400"/><rect x="1314.46" y="1336.700" width="7.300" height="7.400"/></g><defs><filter id="tg" x="-10%" y="-30%" width="120%" height="160%"><feGaussianBlur stdDeviation="1.300"/></filter></defs><g fill="#1fa5b0"><rect x="1223" y="1351.200" width="113.300" height="13.600"/><rect x="1329.200" y="1323" width="7.100" height="29"/><rect x="1336" y="1344.100" width="7" height="7.100"/><rect x="1230.10" y="1336.700" width="7.300" height="7.400"/><rect x="1244.16" y="1336.700" width="7.300" height="7.400"/><rect x="1258.22" y="1336.700" width="7.300" height="7.400"/><rect x="1272.28" y="1336.700" width="7.300" height="7.400"/><rect x="1286.34" y="1336.700" width="7.300" height="7.400"/><rect x="1300.40" y="1336.700" width="7.300" height="7.400"/><rect x="1314.46" y="1336.700" width="7.300" height="7.400"/></g><circle cx="1226.600" cy="1340.300" r="2.500" fill="#e77b83"/><circle cx="1226.600" cy="1347.400" r="2.500" fill="#e77b83"/><circle cx="1339.400" cy="1333.200" r="2.500" fill="#e83f5e"/><circle cx="1339.400" cy="1340.300" r="2.500" fill="#e83f5e"/><g font-family="Liberation Mono" font-size="4.600" fill="#d8d8d8" font-weight="bold"><text x="1222.400" y="1341.600" text-anchor="end">Divident —</text><text x="1222.400" y="1348.800" text-anchor="end">Divizor —</text><text x="1343.400" y="1334.600">— Quotent</text><text x="1343.400" y="1341.700">— remainder</text><text x="1283" y="1344.800" text-anchor="middle" font-size="3.600">div8</text></g></svg>
</body></html>
